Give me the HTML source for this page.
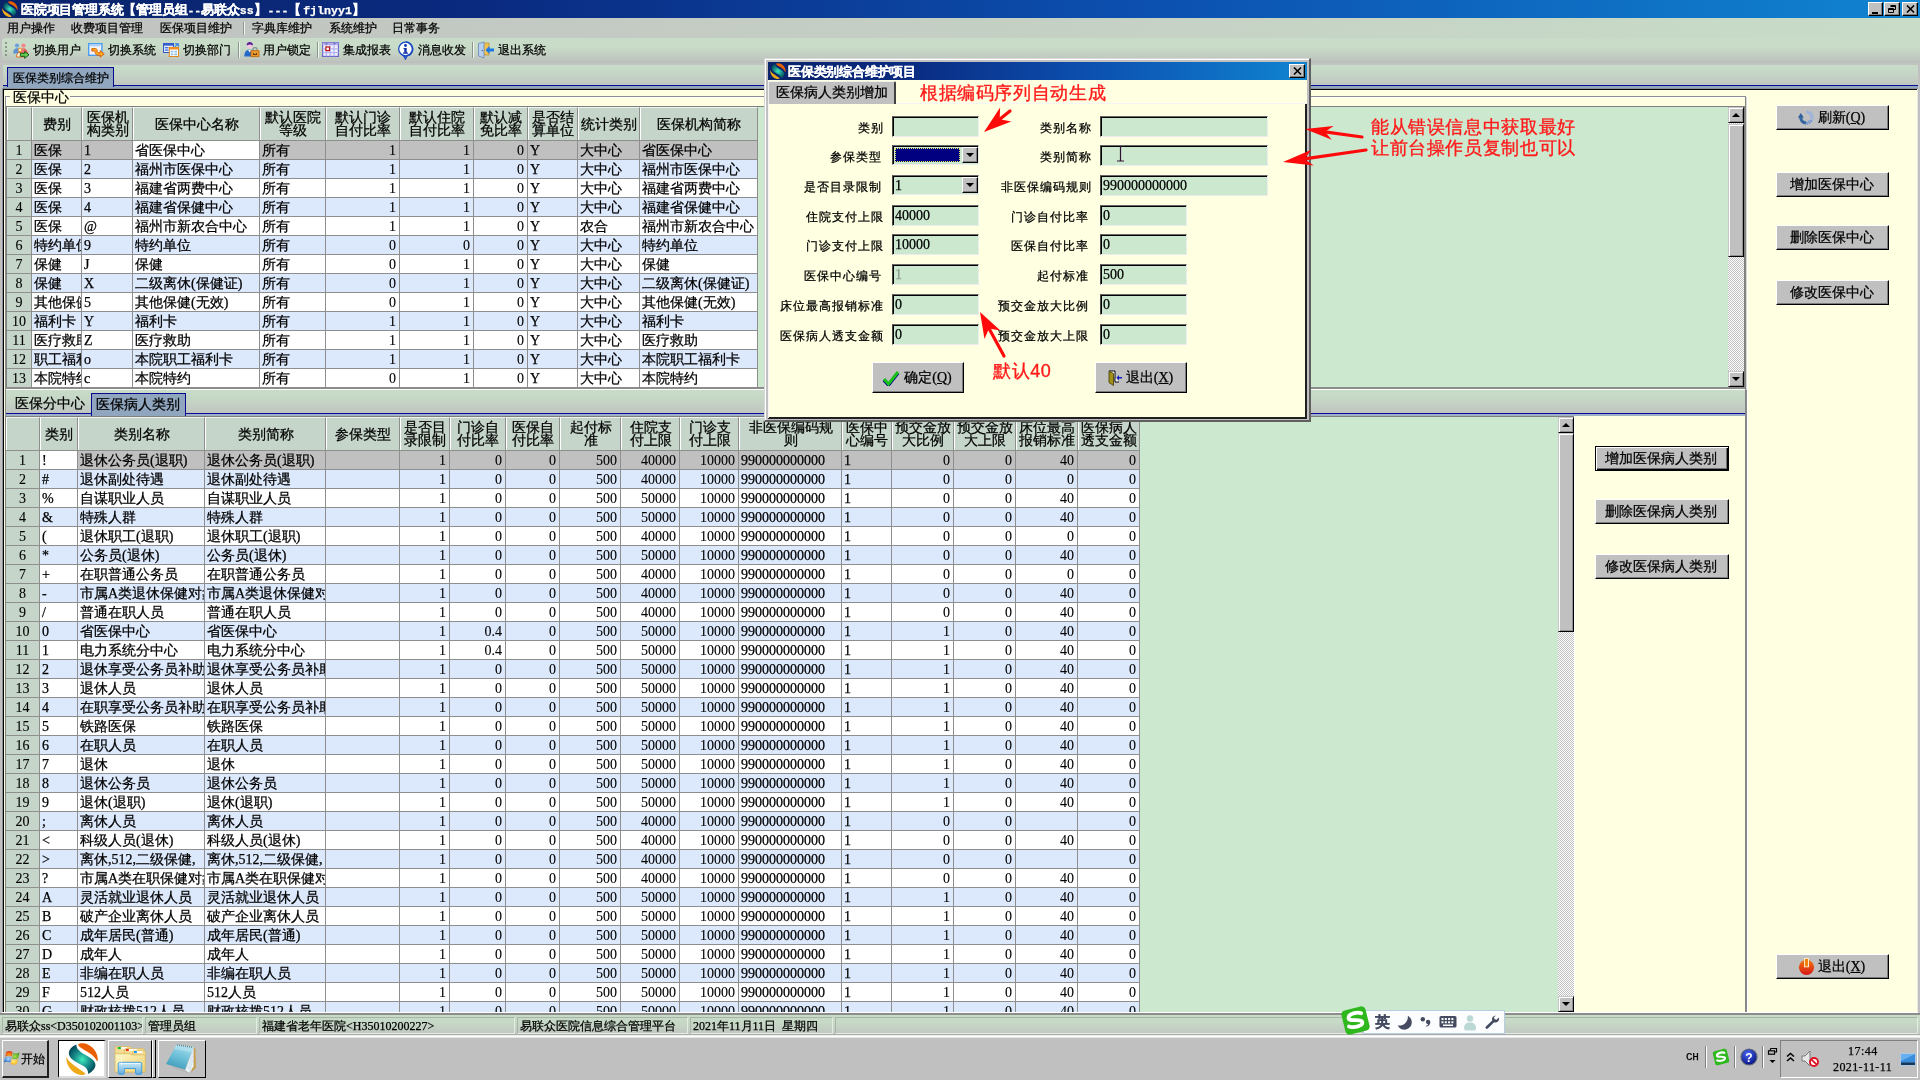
<!DOCTYPE html>
<html lang="zh"><head><meta charset="utf-8"><title>医院项目管理系统</title>
<style>
*{box-sizing:border-box;margin:0;padding:0}
html,body{width:1920px;height:1080px;overflow:hidden;background:#c0c0c0}
body{will-change:transform;-webkit-text-stroke:0.25px currentColor;position:relative;font-family:"Liberation Serif",serif;font-size:12px;color:#000;line-height:1}
.a{position:absolute;white-space:nowrap;overflow:hidden}
.m{font-family:"Liberation Mono",monospace;font-size:11.6px;letter-spacing:0}
.t12{font-size:12px;line-height:14px}
.t14{font-size:14px;line-height:16px}
.g{position:absolute;overflow:hidden}
.c{position:absolute;top:0;height:19px;border-right:1px solid #8e8e8e;border-bottom:1px solid #8e8e8e;font-size:14px;line-height:19px;padding:0 2px 0 2px;white-space:nowrap;overflow:hidden}
.r{text-align:right;padding:0 3px 0 0;-webkit-text-stroke:0.1px currentColor}
.n{text-align:center;background:#c5d5c9 !important;padding:0;-webkit-text-stroke:0.1px currentColor}
.row{position:absolute;left:0;height:19px}
.h{position:absolute;top:0;background:#c5d5c9;border-left:1px solid #fff;border-right:1px solid #8e8e8e;border-top:1px solid #eef4ee;font-size:14px;line-height:13px;text-align:center;white-space:nowrap;overflow:hidden;display:flex;align-items:center;justify-content:center}
.btn{position:absolute;background:#c0c0c0;border-top:1px solid #fff;border-left:1px solid #fff;border-right:1px solid #000;border-bottom:1px solid #000;box-shadow:inset -1px -1px 0 #7c7c7c;font-size:14px;display:flex;align-items:center;justify-content:center;white-space:nowrap;padding:1px 2px 0 0}
.inp{position:absolute;background:#cce8cf;border-top:1px solid #686868;border-left:1px solid #484848;border-right:1px solid #ececec;border-bottom:1px solid #ececec;box-shadow:inset 1px 1px 0 #000;font-size:14px;line-height:18px;padding:1px 0 0 2px;white-space:nowrap;overflow:hidden}
.lbl{position:absolute;font-size:12px;line-height:14px;text-align:right;white-space:nowrap;letter-spacing:1px}
.red{position:absolute;color:#ff1a1a;font-family:"Liberation Sans",sans-serif;font-weight:500;-webkit-text-stroke:0.35px #ff1a1a;white-space:nowrap}
.sp{position:absolute;top:1017px;height:17px;border:1px solid #a8b4a8;border-right-color:#e4ece4;border-bottom-color:#e4ece4;font-size:12px;line-height:16px;padding-left:2px;word-spacing:3px;white-space:nowrap;overflow:hidden}
.tb{position:absolute;top:1040px;height:38px;background:#c0c0c0;border-top:1px solid #fff;border-left:1px solid #fff;border-right:2px solid #202020;border-bottom:2px solid #202020}
</style></head><body>

<div class="a" style="left:0;top:0;width:1920px;height:18px;background:linear-gradient(90deg,#0a246a 0%,#0a2a80 25%,#0c50b0 60%,#1084d0 100%)"></div>
<svg class="a" style="left:2px;top:1px" width="16" height="16" viewBox="0 0 33 32" preserveAspectRatio="none"><defs><radialGradient id="lg2" cx="16.500" cy="16.500" r="15" gradientUnits="userSpaceOnUse"><stop offset="0" stop-color="#40ecbc"/><stop offset=".45" stop-color="#1e9c94"/><stop offset="1" stop-color="#044c5c"/></radialGradient></defs><path d="M12.300 1.600C14 0 19 -.5 24 2.500C29 5.500 32.500 11 32.300 17.500L31.600 18.200C29 13 24 10 19 7.200C16 5.500 13 4 12.300 1.600Z" fill="#ea5e04"/><path d="M.6 13.800C-.3 19 2.500 25 7.500 29C11.500 32 16.500 32.500 19.300 31.600L19.600 30.300C16 27.500 11 24.500 7 21.500C3.500 19 1.500 16.500 .6 13.800Z" fill="#eeaa18"/><path d="M10.500 1.400C5 3.500 2 8 3.200 12C4.500 16 9 18.500 14 21C19 23.500 22.500 25.500 22.600 30.900C27 28.500 30.500 25 29.800 21C29 17 24.500 14.500 20 12C15 9 10.500 6.500 10.500 1.400Z" fill="url(#lg2)"/></svg>
<div class="a" style="left:21px;top:2px;height:15px;color:#fff;font-size:13px;line-height:15px;font-weight:bold;letter-spacing:-0.2px">医院项目管理系统【管理员组<span class="m">--</span>易联众<span class="m">ss</span>】<span class="m" style="margin-left:1px">---</span>【<span class="m" style="margin-left:2px">fjlnyy1</span>】</div>
<div class="a" style="left:1868px;top:2px;width:15px;height:14px;background:#c0c0c0;border-top:1px solid #fff;border-left:1px solid #fff;border-right:1px solid #000;border-bottom:1px solid #000;box-shadow:inset -1px -1px 0 #808080"><div class="a" style="left:3px;top:9px;width:6px;height:2px;background:#000"></div></div>
<div class="a" style="left:1884px;top:2px;width:16px;height:14px;background:#c0c0c0;border-top:1px solid #fff;border-left:1px solid #fff;border-right:1px solid #000;border-bottom:1px solid #000;box-shadow:inset -1px -1px 0 #808080"><svg class="a" style="left:2px;top:1px" width="10" height="10" viewBox="0 0 10 10"><path d="M3.5 1.5h5v4h-2M3.5 2.5h5" stroke="#000" fill="none"/><path d="M1.5 4.5h5v4h-5zM1.5 5.5h5" stroke="#000" fill="none"/></svg></div>
<div class="a" style="left:1902px;top:2px;width:16px;height:14px;background:#c0c0c0;border-top:1px solid #fff;border-left:1px solid #fff;border-right:1px solid #000;border-bottom:1px solid #000;box-shadow:inset -1px -1px 0 #808080"><svg class="a" style="left:3px;top:2px" width="9" height="8" viewBox="0 0 9 8"><path d="M1 0.5L8 7.5M8 0.5L1 7.5" stroke="#000" stroke-width="1.6"/></svg></div>
<div class="a" style="left:0;top:18px;width:1920px;height:20px;background:linear-gradient(90deg,#c0c2c0 0%,#c3cac3 30%,#c8dcc8 100%)"></div>
<div class="a t12" style="left:7px;top:21px">用户操作</div>
<div class="a t12" style="left:71px;top:21px">收费项目管理</div>
<div class="a t12" style="left:160px;top:21px">医保项目维护</div>
<div class="a t12" style="left:252px;top:21px">字典库维护</div>
<div class="a t12" style="left:329px;top:21px">系统维护</div>
<div class="a t12" style="left:392px;top:21px">日常事务</div>
<div class="a" style="left:243px;top:22px;width:1px;height:13px;background:#909890"></div><div class="a" style="left:244px;top:22px;width:1px;height:13px;background:#eef4ee"></div>
<div class="a" style="left:0;top:38px;width:1920px;height:27px;background:#c0c0c0"></div>
<div class="a" style="left:2px;top:38px;width:1918px;height:25px;border-radius:4px 0 0 4px;background:linear-gradient(180deg,#c9dcc9 0%,#c8dcc8 35%,#c2cec2 70%,#bcbebc 100%)"></div>
<div class="a" style="left:0;top:63px;width:1920px;height:2px;background:#c2c4c2"></div>
<div class="a" style="left:5px;top:42px;width:2px;height:14px;background:repeating-linear-gradient(180deg,#8a968a 0 2px,transparent 2px 4px)"></div>
<svg class="a" style="left:12px;top:42px" width="18" height="17" viewBox="0 0 18 17"><circle cx="5" cy="3.600" r="2.100" fill="#6aa0dc"/><path d="M1.200 11.500c0-3.800 1.600-5.300 3.800-5.300s3.800 1.500 3.800 5.300z" fill="#5a94d4"/><circle cx="11.500" cy="3.600" r="2.100" fill="#f08888"/><path d="M7.700 11.500c0-3.800 1.600-5.300 3.800-5.300s3.800 1.500 3.800 5.300z" fill="#ec7474"/><path d="M12.500 7l3.500 4" stroke="#e04040" stroke-width=".8"/><circle cx="8" cy="8" r="1.900" fill="#fce8c0" stroke="#e07818" stroke-width=".8"/><path d="M4.500 15c0-3 1.500-4.600 3.500-4.600s3.500 1.600 3.500 4.600z" fill="#fff4e0" stroke="#e06810" stroke-width=".9"/><path d="M8.300 11.300h4.400v-2l4.300 3.500-4.300 3.500v-2h-4.400z" fill="#60d050" stroke="#104810" stroke-width=".9"/></svg>
<svg class="a" style="left:88px;top:43px" width="18" height="17" viewBox="0 0 18 17"><rect x=".7" y=".7" width="13.200" height="11.600" fill="#f4f4f8" stroke="#4c9cf0" stroke-width="1.400"/><rect x="2" y="2" width="10.500" height="1.300" fill="#a8d0f8"/><path d="M3.800 5.600h3.600c1.300 0 1.800 1 1.800 2.200s.5 1.800 1.500 1.800h1.500v-2l4 3.300-4 3.300v-2h-2.300c-1.800 0-2.700-1.300-2.700-2.700s-.3-1.400-1-1.400h-2.400z" fill="#fca820" stroke="#d85c08" stroke-width=".9"/></svg>
<svg class="a" style="left:163px;top:43px" width="16" height="14" viewBox="0 0 16 14"><rect x=".5" y=".5" width="10" height="9" fill="#e8eefc" stroke="#3058c0" stroke-width="1"/><rect x=".5" y=".5" width="10" height="2.200" fill="#3860d0"/><rect x="1.800" y="4" width="3.600" height="1.400" fill="#4878e0"/><rect x="1.800" y="6.400" width="3.600" height="1.400" fill="#4878e0"/><path d="M11.800 .7h3.500v3M15.300 .7l-3.400 3" stroke="#2878e8" stroke-width="1.100" fill="none"/><rect x="6.300" y="4.500" width="9.200" height="9" fill="#fff" stroke="#e08818" stroke-width="1"/><rect x="6.300" y="4.500" width="9.200" height="2" fill="#f09020"/><path d="M7.800 7.800h2.600v1.800h-2.600zM11.400 7.800h2.600v1.800h-2.600zM7.800 10.600h2.600v1.700h-2.600zM11.400 10.600h2.600v1.700h-2.600z" fill="#90c0e8"/></svg>
<svg class="a" style="left:243px;top:41px" width="17" height="17" viewBox="0 0 17 17"><circle cx="6.800" cy="4.500" r="3" fill="#f0c8e0"/><path d="M3.700 3.800c0-3.600 6.200-3.600 6.200 0l-.4.600c-1.800-1.300-3.600-1.300-5.400 0z" fill="#5a2090"/><path d="M1.300 15.500c0-5 2.200-6.800 5.500-6.800s5.500 1.800 5.500 6.800z" fill="#2468c8"/><path d="M5.200 8.900l1.600 2.600 1.600-2.600z" fill="#fff"/><path d="M10 9.800v-1.300c0-2.400 4-2.400 4 0v1.300" stroke="#8a8e98" stroke-width="1.200" fill="none"/><rect x="8" y="9.700" width="8" height="6" fill="#f09828" stroke="#b86808" stroke-width=".8"/><path d="M10 11.300l2 1.400 2-1.400v2.600h-4z" fill="#6a3c00"/><path d="M10.300 11.500l1.700 1.200 1.700-1.200" stroke="#f8d8a0" stroke-width=".6" fill="none"/></svg>
<svg class="a" style="left:322px;top:42px" width="17" height="15" viewBox="0 0 17 15"><rect x=".6" y=".6" width="15.800" height="13.800" fill="#f0f0ff" stroke="#6868c8" stroke-width="1.200"/><rect x=".6" y=".6" width="15.800" height="2.600" fill="#b4acec"/><path d="M4.400 3.200v11M8.200 3.200v11M12 3.200v11M.6 6.800h15.800M.6 10.600h15.800" stroke="#b4b4f0" stroke-width="1.300"/><rect x="3.900" y="5" width="3.600" height="3.600" fill="#fff" stroke="#c01010" stroke-width="1.200"/><path d="M3.500 1.800h2M11.500 1.800h2" stroke="#5050a8" stroke-width=".9"/></svg>
<svg class="a" style="left:397px;top:41px" width="18" height="19" viewBox="0 0 18 19"><path d="M8.500 1a7 7 0 1 1-2 13.700l2 3.300 1.500-3.100a7 7 0 0 0-1.500-13.900z" fill="#fff" stroke="#1848c0" stroke-width="1.300"/><circle cx="8.500" cy="8" r="6.800" fill="#fff" stroke="#1848c0" stroke-width="1.300"/><circle cx="8.500" cy="4.500" r="1.400" fill="#1030a8"/><path d="M6.500 7h3.200v4.500h1.300v1.300h-5v-1.300h1.300v-3.200h-.8z" fill="#1030a8"/></svg>
<svg class="a" style="left:477px;top:41px" width="18" height="18" viewBox="0 0 18 18"><rect x="6" y="2" width="6" height="12" fill="#f0c050" stroke="#a88030" stroke-width=".6"/><path d="M1.500 2.500l5.500-1.500v16l-5.500-2z" fill="#b8d0f0" stroke="#6888b8" stroke-width=".8"/><circle cx="5.300" cy="9.500" r=".8" fill="#4868a0"/><path d="M17 7.500h-4.500v-2.500l-4 4 4 4v-2.500h4.500z" fill="#1878e8"/></svg>
<div class="a t12" style="left:33px;top:43px">切换用户</div>
<div class="a t12" style="left:108px;top:43px">切换系统</div>
<div class="a t12" style="left:183px;top:43px">切换部门</div>
<div class="a t12" style="left:263px;top:43px">用户锁定</div>
<div class="a t12" style="left:343px;top:43px">集成报表</div>
<div class="a t12" style="left:418px;top:43px">消息收发</div>
<div class="a t12" style="left:498px;top:43px">退出系统</div>
<div class="a" style="left:238px;top:42px;width:1px;height:16px;background:#8c948c"></div><div class="a" style="left:239px;top:42px;width:1px;height:16px;background:#f0f6f0"></div>
<div class="a" style="left:317px;top:42px;width:1px;height:16px;background:#8c948c"></div><div class="a" style="left:318px;top:42px;width:1px;height:16px;background:#f0f6f0"></div>
<div class="a" style="left:472px;top:42px;width:1px;height:16px;background:#8c948c"></div><div class="a" style="left:473px;top:42px;width:1px;height:16px;background:#f0f6f0"></div>
<div class="a" style="left:3px;top:65px;width:1915px;height:21px;background:linear-gradient(180deg,#c8dcc8 0%,#c6d6c6 40%,#c0c4c0 100%)"></div>
<div class="a" style="left:3px;top:85px;width:1915px;height:1px;background:#0a0a90"></div>
<div class="a" style="left:3px;top:86px;width:1915px;height:2px;background:#90a6be"></div>
<div class="a t12" style="left:7px;top:67px;width:107px;height:20px;background:#90a6be;border:1px solid #0a0a90;border-bottom:none;padding:3px 0 0 5px">医保类别综合维护</div>
<div class="a" style="left:2px;top:88px;width:1916px;height:1px;background:#8c9098"></div><div class="a" style="left:3px;top:89px;width:1914px;height:1px;background:#000"></div>
<div class="a" style="left:2px;top:88px;width:1px;height:925px;background:#8c9098"></div><div class="a" style="left:3px;top:89px;width:1px;height:923px;background:#000"></div>
<div class="a" style="left:4px;top:90px;width:1913px;height:922px;background:#ffffe1"></div>
<div class="a" style="left:1917px;top:89px;width:1px;height:924px;background:#e8e8e8"></div>
<div class="a" style="left:2px;top:1012px;width:1916px;height:1px;background:#fff"></div>
<div class="a" style="left:0px;top:1013px;width:1920px;height:2px;background:#8c8c8c"></div>
<div class="a" style="left:5px;top:96px;width:1741px;height:916px;border:1px solid #8c8c8c;border-bottom:none;box-shadow:inset 1px 1px 0 #fff,1px 0 0 #fff"></div>
<div class="a" style="left:1745px;top:97px;width:1px;height:915px;background:#858585"></div><div class="a" style="left:1746px;top:97px;width:1px;height:293px;background:#d8d8c8"></div><div class="a" style="left:1746px;top:390px;width:1px;height:622px;background:#8c8c8c"></div><div class="a" style="left:1747px;top:97px;width:1px;height:915px;background:#fff"></div>
<div class="a" style="left:10px;top:90px;width:60px;height:16px;background:#ffffe1;font-size:14px;line-height:16px;padding-left:3px">医保中心</div>
<div class="g" style="left:7px;top:107px;width:1721px;height:280px;background:#cce8cf"><div class="h" style="left:0px;width:25px;height:33px"><div></div></div><div class="h" style="left:25px;width:50px;height:33px"><div>费别</div></div><div class="h" style="left:75px;width:51px;height:33px"><div>医保机<br>构类别</div></div><div class="h" style="left:126px;width:127px;height:33px"><div>医保中心名称</div></div><div class="h" style="left:253px;width:66px;height:33px"><div>默认医院<br>等级</div></div><div class="h" style="left:319px;width:74px;height:33px"><div>默认门诊<br>自付比率</div></div><div class="h" style="left:393px;width:74px;height:33px"><div>默认住院<br>自付比率</div></div><div class="h" style="left:467px;width:54px;height:33px"><div>默认减<br>免比率</div></div><div class="h" style="left:521px;width:50px;height:33px"><div>是否结<br>算单位</div></div><div class="h" style="left:571px;width:62px;height:33px"><div>统计类别</div></div><div class="h" style="left:633px;width:118px;height:33px"><div>医保机构简称</div></div><div class="a" style="left:0;top:33px;width:751px;height:1px;background:#8e8e8e"></div><div class="row" style="top:34px;width:751px"><div class="c n" style="left:0px;width:25px;background:#c0c0c0">1</div><div class="c" style="left:25px;width:50px;background:#c0c0c0">医保</div><div class="c" style="left:75px;width:51px;background:#c0c0c0">1</div><div class="c" style="left:126px;width:127px;background:#fff">省医保中心</div><div class="c" style="left:253px;width:66px;background:#c0c0c0">所有</div><div class="c r" style="left:319px;width:74px;background:#c0c0c0">1</div><div class="c r" style="left:393px;width:74px;background:#c0c0c0">1</div><div class="c r" style="left:467px;width:54px;background:#c0c0c0">0</div><div class="c" style="left:521px;width:50px;background:#c0c0c0">Y</div><div class="c" style="left:571px;width:62px;background:#c0c0c0">大中心</div><div class="c" style="left:633px;width:118px;background:#c0c0c0">省医保中心</div></div><div class="row" style="top:53px;width:751px"><div class="c n" style="left:0px;width:25px;background:#dce8fb">2</div><div class="c" style="left:25px;width:50px;background:#dce8fb">医保</div><div class="c" style="left:75px;width:51px;background:#dce8fb">2</div><div class="c" style="left:126px;width:127px;background:#dce8fb">福州市医保中心</div><div class="c" style="left:253px;width:66px;background:#dce8fb">所有</div><div class="c r" style="left:319px;width:74px;background:#dce8fb">1</div><div class="c r" style="left:393px;width:74px;background:#dce8fb">1</div><div class="c r" style="left:467px;width:54px;background:#dce8fb">0</div><div class="c" style="left:521px;width:50px;background:#dce8fb">Y</div><div class="c" style="left:571px;width:62px;background:#dce8fb">大中心</div><div class="c" style="left:633px;width:118px;background:#dce8fb">福州市医保中心</div></div><div class="row" style="top:72px;width:751px"><div class="c n" style="left:0px;width:25px;background:#fff">3</div><div class="c" style="left:25px;width:50px;background:#fff">医保</div><div class="c" style="left:75px;width:51px;background:#fff">3</div><div class="c" style="left:126px;width:127px;background:#fff">福建省两费中心</div><div class="c" style="left:253px;width:66px;background:#fff">所有</div><div class="c r" style="left:319px;width:74px;background:#fff">1</div><div class="c r" style="left:393px;width:74px;background:#fff">1</div><div class="c r" style="left:467px;width:54px;background:#fff">0</div><div class="c" style="left:521px;width:50px;background:#fff">Y</div><div class="c" style="left:571px;width:62px;background:#fff">大中心</div><div class="c" style="left:633px;width:118px;background:#fff">福建省两费中心</div></div><div class="row" style="top:91px;width:751px"><div class="c n" style="left:0px;width:25px;background:#dce8fb">4</div><div class="c" style="left:25px;width:50px;background:#dce8fb">医保</div><div class="c" style="left:75px;width:51px;background:#dce8fb">4</div><div class="c" style="left:126px;width:127px;background:#dce8fb">福建省保健中心</div><div class="c" style="left:253px;width:66px;background:#dce8fb">所有</div><div class="c r" style="left:319px;width:74px;background:#dce8fb">1</div><div class="c r" style="left:393px;width:74px;background:#dce8fb">1</div><div class="c r" style="left:467px;width:54px;background:#dce8fb">0</div><div class="c" style="left:521px;width:50px;background:#dce8fb">Y</div><div class="c" style="left:571px;width:62px;background:#dce8fb">大中心</div><div class="c" style="left:633px;width:118px;background:#dce8fb">福建省保健中心</div></div><div class="row" style="top:110px;width:751px"><div class="c n" style="left:0px;width:25px;background:#fff">5</div><div class="c" style="left:25px;width:50px;background:#fff">医保</div><div class="c" style="left:75px;width:51px;background:#fff">@</div><div class="c" style="left:126px;width:127px;background:#fff">福州市新农合中心</div><div class="c" style="left:253px;width:66px;background:#fff">所有</div><div class="c r" style="left:319px;width:74px;background:#fff">1</div><div class="c r" style="left:393px;width:74px;background:#fff">1</div><div class="c r" style="left:467px;width:54px;background:#fff">0</div><div class="c" style="left:521px;width:50px;background:#fff">Y</div><div class="c" style="left:571px;width:62px;background:#fff">农合</div><div class="c" style="left:633px;width:118px;background:#fff">福州市新农合中心</div></div><div class="row" style="top:129px;width:751px"><div class="c n" style="left:0px;width:25px;background:#dce8fb">6</div><div class="c" style="left:25px;width:50px;background:#dce8fb">特约单位</div><div class="c" style="left:75px;width:51px;background:#dce8fb">9</div><div class="c" style="left:126px;width:127px;background:#dce8fb">特约单位</div><div class="c" style="left:253px;width:66px;background:#dce8fb">所有</div><div class="c r" style="left:319px;width:74px;background:#dce8fb">0</div><div class="c r" style="left:393px;width:74px;background:#dce8fb">0</div><div class="c r" style="left:467px;width:54px;background:#dce8fb">0</div><div class="c" style="left:521px;width:50px;background:#dce8fb">Y</div><div class="c" style="left:571px;width:62px;background:#dce8fb">大中心</div><div class="c" style="left:633px;width:118px;background:#dce8fb">特约单位</div></div><div class="row" style="top:148px;width:751px"><div class="c n" style="left:0px;width:25px;background:#fff">7</div><div class="c" style="left:25px;width:50px;background:#fff">保健</div><div class="c" style="left:75px;width:51px;background:#fff">J</div><div class="c" style="left:126px;width:127px;background:#fff">保健</div><div class="c" style="left:253px;width:66px;background:#fff">所有</div><div class="c r" style="left:319px;width:74px;background:#fff">0</div><div class="c r" style="left:393px;width:74px;background:#fff">1</div><div class="c r" style="left:467px;width:54px;background:#fff">0</div><div class="c" style="left:521px;width:50px;background:#fff">Y</div><div class="c" style="left:571px;width:62px;background:#fff">大中心</div><div class="c" style="left:633px;width:118px;background:#fff">保健</div></div><div class="row" style="top:167px;width:751px"><div class="c n" style="left:0px;width:25px;background:#dce8fb">8</div><div class="c" style="left:25px;width:50px;background:#dce8fb">保健</div><div class="c" style="left:75px;width:51px;background:#dce8fb">X</div><div class="c" style="left:126px;width:127px;background:#dce8fb">二级离休(保健证)</div><div class="c" style="left:253px;width:66px;background:#dce8fb">所有</div><div class="c r" style="left:319px;width:74px;background:#dce8fb">0</div><div class="c r" style="left:393px;width:74px;background:#dce8fb">1</div><div class="c r" style="left:467px;width:54px;background:#dce8fb">0</div><div class="c" style="left:521px;width:50px;background:#dce8fb">Y</div><div class="c" style="left:571px;width:62px;background:#dce8fb">大中心</div><div class="c" style="left:633px;width:118px;background:#dce8fb">二级离休(保健证)</div></div><div class="row" style="top:186px;width:751px"><div class="c n" style="left:0px;width:25px;background:#fff">9</div><div class="c" style="left:25px;width:50px;background:#fff">其他保健</div><div class="c" style="left:75px;width:51px;background:#fff">5</div><div class="c" style="left:126px;width:127px;background:#fff">其他保健(无效)</div><div class="c" style="left:253px;width:66px;background:#fff">所有</div><div class="c r" style="left:319px;width:74px;background:#fff">0</div><div class="c r" style="left:393px;width:74px;background:#fff">1</div><div class="c r" style="left:467px;width:54px;background:#fff">0</div><div class="c" style="left:521px;width:50px;background:#fff">Y</div><div class="c" style="left:571px;width:62px;background:#fff">大中心</div><div class="c" style="left:633px;width:118px;background:#fff">其他保健(无效)</div></div><div class="row" style="top:205px;width:751px"><div class="c n" style="left:0px;width:25px;background:#dce8fb">10</div><div class="c" style="left:25px;width:50px;background:#dce8fb">福利卡</div><div class="c" style="left:75px;width:51px;background:#dce8fb">Y</div><div class="c" style="left:126px;width:127px;background:#dce8fb">福利卡</div><div class="c" style="left:253px;width:66px;background:#dce8fb">所有</div><div class="c r" style="left:319px;width:74px;background:#dce8fb">1</div><div class="c r" style="left:393px;width:74px;background:#dce8fb">1</div><div class="c r" style="left:467px;width:54px;background:#dce8fb">0</div><div class="c" style="left:521px;width:50px;background:#dce8fb">Y</div><div class="c" style="left:571px;width:62px;background:#dce8fb">大中心</div><div class="c" style="left:633px;width:118px;background:#dce8fb">福利卡</div></div><div class="row" style="top:224px;width:751px"><div class="c n" style="left:0px;width:25px;background:#fff">11</div><div class="c" style="left:25px;width:50px;background:#fff">医疗救助</div><div class="c" style="left:75px;width:51px;background:#fff">Z</div><div class="c" style="left:126px;width:127px;background:#fff">医疗救助</div><div class="c" style="left:253px;width:66px;background:#fff">所有</div><div class="c r" style="left:319px;width:74px;background:#fff">1</div><div class="c r" style="left:393px;width:74px;background:#fff">1</div><div class="c r" style="left:467px;width:54px;background:#fff">0</div><div class="c" style="left:521px;width:50px;background:#fff">Y</div><div class="c" style="left:571px;width:62px;background:#fff">大中心</div><div class="c" style="left:633px;width:118px;background:#fff">医疗救助</div></div><div class="row" style="top:243px;width:751px"><div class="c n" style="left:0px;width:25px;background:#dce8fb">12</div><div class="c" style="left:25px;width:50px;background:#dce8fb">职工福利</div><div class="c" style="left:75px;width:51px;background:#dce8fb">o</div><div class="c" style="left:126px;width:127px;background:#dce8fb">本院职工福利卡</div><div class="c" style="left:253px;width:66px;background:#dce8fb">所有</div><div class="c r" style="left:319px;width:74px;background:#dce8fb">1</div><div class="c r" style="left:393px;width:74px;background:#dce8fb">1</div><div class="c r" style="left:467px;width:54px;background:#dce8fb">0</div><div class="c" style="left:521px;width:50px;background:#dce8fb">Y</div><div class="c" style="left:571px;width:62px;background:#dce8fb">大中心</div><div class="c" style="left:633px;width:118px;background:#dce8fb">本院职工福利卡</div></div><div class="row" style="top:262px;width:751px"><div class="c n" style="left:0px;width:25px;background:#fff">13</div><div class="c" style="left:25px;width:50px;background:#fff">本院特约</div><div class="c" style="left:75px;width:51px;background:#fff">c</div><div class="c" style="left:126px;width:127px;background:#fff">本院特约</div><div class="c" style="left:253px;width:66px;background:#fff">所有</div><div class="c r" style="left:319px;width:74px;background:#fff">0</div><div class="c r" style="left:393px;width:74px;background:#fff">1</div><div class="c r" style="left:467px;width:54px;background:#fff">0</div><div class="c" style="left:521px;width:50px;background:#fff">Y</div><div class="c" style="left:571px;width:62px;background:#fff">大中心</div><div class="c" style="left:633px;width:118px;background:#fff">本院特约</div></div></div>
<div class="a" style="left:1728px;top:107px;width:16px;height:280px;background-color:#fff;background-image:linear-gradient(45deg,#c0c0c0 25%,transparent 25%,transparent 75%,#c0c0c0 75%),linear-gradient(45deg,#c0c0c0 25%,transparent 25%,transparent 75%,#c0c0c0 75%);background-size:2px 2px;background-position:0 0,1px 1px"></div><div class="a" style="left:1728px;top:107px;width:16px;height:16px;background:#c0c0c0;border-top:1px solid #c8c8c8;border-left:1px solid #c8c8c8;border-right:1px solid #000;border-bottom:1px solid #000;box-shadow:inset 1px 1px 0 #fff,inset -1px -1px 0 #909090"><svg class="a" style="left:3px;top:5px" width="8" height="4" viewBox="0 0 8 4"><path d="M0 4L4 0L8 4z" fill="#000"/></svg></div><div class="a" style="left:1728px;top:124px;width:16px;height:133px;background:#c0c0c0;border-top:1px solid #c8c8c8;border-left:1px solid #c8c8c8;border-right:1px solid #000;border-bottom:1px solid #000;box-shadow:inset 1px 1px 0 #fff,inset -1px -1px 0 #909090"></div><div class="a" style="left:1728px;top:371px;width:16px;height:16px;background:#c0c0c0;border-top:1px solid #c8c8c8;border-left:1px solid #c8c8c8;border-right:1px solid #000;border-bottom:1px solid #000;box-shadow:inset 1px 1px 0 #fff,inset -1px -1px 0 #909090"><svg class="a" style="left:3px;top:5px" width="8" height="4" viewBox="0 0 8 4"><path d="M0 0L4 4L8 0z" fill="#000"/></svg></div>
<div class="a" style="left:6px;top:106px;width:1739px;height:1px;background:#808080"></div><div class="a" style="left:6px;top:106px;width:1px;height:282px;background:#808080"></div><div class="a" style="left:1744px;top:106px;width:1px;height:282px;background:#808080"></div>
<div class="a" style="left:6px;top:387px;width:1739px;height:2px;background:#8c8c8c"></div><div class="a" style="left:6px;top:389px;width:1739px;height:1px;background:#fff"></div>
<div class="a" style="left:6px;top:390px;width:1739px;height:24px;background:linear-gradient(180deg,#c8dcc8 0%,#c6d6c6 40%,#c0c4c0 100%)"></div>
<div class="a" style="left:6px;top:413px;width:1739px;height:1px;background:#0a0a90"></div>
<div class="a" style="left:6px;top:414px;width:1739px;height:2px;background:#9fb0c8"></div>
<div class="a t14" style="left:15px;top:396px">医保分中心</div>
<div class="a t14" style="left:91px;top:393px;width:95px;height:23px;background:#90a6be;border:1px solid #0a0a90;border-bottom:none;padding:3px 0 0 4px">医保病人类别</div>
<div class="g" style="left:6px;top:417px;width:1552px;height:595px;background:#cce8cf"><div class="h" style="left:0px;width:34px;height:33px"><div></div></div><div class="h" style="left:34px;width:38px;height:33px"><div>类别</div></div><div class="h" style="left:72px;width:127px;height:33px"><div>类别名称</div></div><div class="h" style="left:199px;width:121px;height:33px"><div>类别简称</div></div><div class="h" style="left:320px;width:74px;height:33px"><div>参保类型</div></div><div class="h" style="left:394px;width:50px;height:33px"><div>是否目<br>录限制</div></div><div class="h" style="left:444px;width:56px;height:33px"><div>门诊自<br>付比率</div></div><div class="h" style="left:500px;width:54px;height:33px"><div>医保自<br>付比率</div></div><div class="h" style="left:554px;width:61px;height:33px"><div>起付标<br>准</div></div><div class="h" style="left:615px;width:59px;height:33px"><div>住院支<br>付上限</div></div><div class="h" style="left:674px;width:59px;height:33px"><div>门诊支<br>付上限</div></div><div class="h" style="left:733px;width:103px;height:33px"><div>非医保编码规<br>则</div></div><div class="h" style="left:836px;width:50px;height:33px"><div>医保中<br>心编号</div></div><div class="h" style="left:886px;width:62px;height:33px"><div>预交金放<br>大比例</div></div><div class="h" style="left:948px;width:62px;height:33px"><div>预交金放<br>大上限</div></div><div class="h" style="left:1010px;width:62px;height:33px"><div>床位最高<br>报销标准</div></div><div class="h" style="left:1072px;width:62px;height:33px"><div>医保病人<br>透支金额</div></div><div class="a" style="left:0;top:33px;width:1134px;height:1px;background:#8e8e8e"></div><div class="row" style="top:34px;width:1134px"><div class="c n" style="left:0px;width:34px;background:#c0c0c0">1</div><div class="c" style="left:34px;width:38px;background:#fff">!</div><div class="c" style="left:72px;width:127px;background:#c0c0c0">退休公务员(退职)</div><div class="c" style="left:199px;width:121px;background:#c0c0c0">退休公务员(退职)</div><div class="c" style="left:320px;width:74px;background:#c0c0c0"></div><div class="c r" style="left:394px;width:50px;background:#c0c0c0">1</div><div class="c r" style="left:444px;width:56px;background:#c0c0c0">0</div><div class="c r" style="left:500px;width:54px;background:#c0c0c0">0</div><div class="c r" style="left:554px;width:61px;background:#c0c0c0">500</div><div class="c r" style="left:615px;width:59px;background:#c0c0c0">40000</div><div class="c r" style="left:674px;width:59px;background:#c0c0c0">10000</div><div class="c" style="left:733px;width:103px;background:#c0c0c0">990000000000</div><div class="c" style="left:836px;width:50px;background:#c0c0c0">1</div><div class="c r" style="left:886px;width:62px;background:#c0c0c0">0</div><div class="c r" style="left:948px;width:62px;background:#c0c0c0">0</div><div class="c r" style="left:1010px;width:62px;background:#c0c0c0">40</div><div class="c r" style="left:1072px;width:62px;background:#c0c0c0">0</div></div><div class="row" style="top:53px;width:1134px"><div class="c n" style="left:0px;width:34px;background:#dce8fb">2</div><div class="c" style="left:34px;width:38px;background:#dce8fb">#</div><div class="c" style="left:72px;width:127px;background:#dce8fb">退休副处待遇</div><div class="c" style="left:199px;width:121px;background:#dce8fb">退休副处待遇</div><div class="c" style="left:320px;width:74px;background:#dce8fb"></div><div class="c r" style="left:394px;width:50px;background:#dce8fb">1</div><div class="c r" style="left:444px;width:56px;background:#dce8fb">0</div><div class="c r" style="left:500px;width:54px;background:#dce8fb">0</div><div class="c r" style="left:554px;width:61px;background:#dce8fb">500</div><div class="c r" style="left:615px;width:59px;background:#dce8fb">40000</div><div class="c r" style="left:674px;width:59px;background:#dce8fb">10000</div><div class="c" style="left:733px;width:103px;background:#dce8fb">990000000000</div><div class="c" style="left:836px;width:50px;background:#dce8fb">1</div><div class="c r" style="left:886px;width:62px;background:#dce8fb">0</div><div class="c r" style="left:948px;width:62px;background:#dce8fb">0</div><div class="c r" style="left:1010px;width:62px;background:#dce8fb">0</div><div class="c r" style="left:1072px;width:62px;background:#dce8fb">0</div></div><div class="row" style="top:72px;width:1134px"><div class="c n" style="left:0px;width:34px;background:#fff">3</div><div class="c" style="left:34px;width:38px;background:#fff">%</div><div class="c" style="left:72px;width:127px;background:#fff">自谋职业人员</div><div class="c" style="left:199px;width:121px;background:#fff">自谋职业人员</div><div class="c" style="left:320px;width:74px;background:#fff"></div><div class="c r" style="left:394px;width:50px;background:#fff">1</div><div class="c r" style="left:444px;width:56px;background:#fff">0</div><div class="c r" style="left:500px;width:54px;background:#fff">0</div><div class="c r" style="left:554px;width:61px;background:#fff">500</div><div class="c r" style="left:615px;width:59px;background:#fff">50000</div><div class="c r" style="left:674px;width:59px;background:#fff">10000</div><div class="c" style="left:733px;width:103px;background:#fff">990000000000</div><div class="c" style="left:836px;width:50px;background:#fff">1</div><div class="c r" style="left:886px;width:62px;background:#fff">0</div><div class="c r" style="left:948px;width:62px;background:#fff">0</div><div class="c r" style="left:1010px;width:62px;background:#fff">40</div><div class="c r" style="left:1072px;width:62px;background:#fff">0</div></div><div class="row" style="top:91px;width:1134px"><div class="c n" style="left:0px;width:34px;background:#dce8fb">4</div><div class="c" style="left:34px;width:38px;background:#dce8fb">&amp;</div><div class="c" style="left:72px;width:127px;background:#dce8fb">特殊人群</div><div class="c" style="left:199px;width:121px;background:#dce8fb">特殊人群</div><div class="c" style="left:320px;width:74px;background:#dce8fb"></div><div class="c r" style="left:394px;width:50px;background:#dce8fb">1</div><div class="c r" style="left:444px;width:56px;background:#dce8fb">0</div><div class="c r" style="left:500px;width:54px;background:#dce8fb">0</div><div class="c r" style="left:554px;width:61px;background:#dce8fb">500</div><div class="c r" style="left:615px;width:59px;background:#dce8fb">50000</div><div class="c r" style="left:674px;width:59px;background:#dce8fb">10000</div><div class="c" style="left:733px;width:103px;background:#dce8fb">990000000000</div><div class="c" style="left:836px;width:50px;background:#dce8fb">1</div><div class="c r" style="left:886px;width:62px;background:#dce8fb">0</div><div class="c r" style="left:948px;width:62px;background:#dce8fb">0</div><div class="c r" style="left:1010px;width:62px;background:#dce8fb">40</div><div class="c r" style="left:1072px;width:62px;background:#dce8fb">0</div></div><div class="row" style="top:110px;width:1134px"><div class="c n" style="left:0px;width:34px;background:#fff">5</div><div class="c" style="left:34px;width:38px;background:#fff">(</div><div class="c" style="left:72px;width:127px;background:#fff">退休职工(退职)</div><div class="c" style="left:199px;width:121px;background:#fff">退休职工(退职)</div><div class="c" style="left:320px;width:74px;background:#fff"></div><div class="c r" style="left:394px;width:50px;background:#fff">1</div><div class="c r" style="left:444px;width:56px;background:#fff">0</div><div class="c r" style="left:500px;width:54px;background:#fff">0</div><div class="c r" style="left:554px;width:61px;background:#fff">500</div><div class="c r" style="left:615px;width:59px;background:#fff">40000</div><div class="c r" style="left:674px;width:59px;background:#fff">10000</div><div class="c" style="left:733px;width:103px;background:#fff">990000000000</div><div class="c" style="left:836px;width:50px;background:#fff">1</div><div class="c r" style="left:886px;width:62px;background:#fff">0</div><div class="c r" style="left:948px;width:62px;background:#fff">0</div><div class="c r" style="left:1010px;width:62px;background:#fff">0</div><div class="c r" style="left:1072px;width:62px;background:#fff">0</div></div><div class="row" style="top:129px;width:1134px"><div class="c n" style="left:0px;width:34px;background:#dce8fb">6</div><div class="c" style="left:34px;width:38px;background:#dce8fb">*</div><div class="c" style="left:72px;width:127px;background:#dce8fb">公务员(退休)</div><div class="c" style="left:199px;width:121px;background:#dce8fb">公务员(退休)</div><div class="c" style="left:320px;width:74px;background:#dce8fb"></div><div class="c r" style="left:394px;width:50px;background:#dce8fb">1</div><div class="c r" style="left:444px;width:56px;background:#dce8fb">0</div><div class="c r" style="left:500px;width:54px;background:#dce8fb">0</div><div class="c r" style="left:554px;width:61px;background:#dce8fb">500</div><div class="c r" style="left:615px;width:59px;background:#dce8fb">50000</div><div class="c r" style="left:674px;width:59px;background:#dce8fb">10000</div><div class="c" style="left:733px;width:103px;background:#dce8fb">990000000000</div><div class="c" style="left:836px;width:50px;background:#dce8fb">1</div><div class="c r" style="left:886px;width:62px;background:#dce8fb">0</div><div class="c r" style="left:948px;width:62px;background:#dce8fb">0</div><div class="c r" style="left:1010px;width:62px;background:#dce8fb">40</div><div class="c r" style="left:1072px;width:62px;background:#dce8fb">0</div></div><div class="row" style="top:148px;width:1134px"><div class="c n" style="left:0px;width:34px;background:#fff">7</div><div class="c" style="left:34px;width:38px;background:#fff">+</div><div class="c" style="left:72px;width:127px;background:#fff">在职普通公务员</div><div class="c" style="left:199px;width:121px;background:#fff">在职普通公务员</div><div class="c" style="left:320px;width:74px;background:#fff"></div><div class="c r" style="left:394px;width:50px;background:#fff">1</div><div class="c r" style="left:444px;width:56px;background:#fff">0</div><div class="c r" style="left:500px;width:54px;background:#fff">0</div><div class="c r" style="left:554px;width:61px;background:#fff">500</div><div class="c r" style="left:615px;width:59px;background:#fff">40000</div><div class="c r" style="left:674px;width:59px;background:#fff">10000</div><div class="c" style="left:733px;width:103px;background:#fff">990000000000</div><div class="c" style="left:836px;width:50px;background:#fff">1</div><div class="c r" style="left:886px;width:62px;background:#fff">0</div><div class="c r" style="left:948px;width:62px;background:#fff">0</div><div class="c r" style="left:1010px;width:62px;background:#fff">0</div><div class="c r" style="left:1072px;width:62px;background:#fff">0</div></div><div class="row" style="top:167px;width:1134px"><div class="c n" style="left:0px;width:34px;background:#dce8fb">8</div><div class="c" style="left:34px;width:38px;background:#dce8fb">-</div><div class="c" style="left:72px;width:127px;background:#dce8fb">市属A类退休保健对象</div><div class="c" style="left:199px;width:121px;background:#dce8fb">市属A类退休保健对象</div><div class="c" style="left:320px;width:74px;background:#dce8fb"></div><div class="c r" style="left:394px;width:50px;background:#dce8fb">1</div><div class="c r" style="left:444px;width:56px;background:#dce8fb">0</div><div class="c r" style="left:500px;width:54px;background:#dce8fb">0</div><div class="c r" style="left:554px;width:61px;background:#dce8fb">500</div><div class="c r" style="left:615px;width:59px;background:#dce8fb">40000</div><div class="c r" style="left:674px;width:59px;background:#dce8fb">10000</div><div class="c" style="left:733px;width:103px;background:#dce8fb">990000000000</div><div class="c" style="left:836px;width:50px;background:#dce8fb">1</div><div class="c r" style="left:886px;width:62px;background:#dce8fb">0</div><div class="c r" style="left:948px;width:62px;background:#dce8fb">0</div><div class="c r" style="left:1010px;width:62px;background:#dce8fb">40</div><div class="c r" style="left:1072px;width:62px;background:#dce8fb">0</div></div><div class="row" style="top:186px;width:1134px"><div class="c n" style="left:0px;width:34px;background:#fff">9</div><div class="c" style="left:34px;width:38px;background:#fff">/</div><div class="c" style="left:72px;width:127px;background:#fff">普通在职人员</div><div class="c" style="left:199px;width:121px;background:#fff">普通在职人员</div><div class="c" style="left:320px;width:74px;background:#fff"></div><div class="c r" style="left:394px;width:50px;background:#fff">1</div><div class="c r" style="left:444px;width:56px;background:#fff">0</div><div class="c r" style="left:500px;width:54px;background:#fff">0</div><div class="c r" style="left:554px;width:61px;background:#fff">500</div><div class="c r" style="left:615px;width:59px;background:#fff">40000</div><div class="c r" style="left:674px;width:59px;background:#fff">10000</div><div class="c" style="left:733px;width:103px;background:#fff">990000000000</div><div class="c" style="left:836px;width:50px;background:#fff">1</div><div class="c r" style="left:886px;width:62px;background:#fff">0</div><div class="c r" style="left:948px;width:62px;background:#fff">0</div><div class="c r" style="left:1010px;width:62px;background:#fff">40</div><div class="c r" style="left:1072px;width:62px;background:#fff">0</div></div><div class="row" style="top:205px;width:1134px"><div class="c n" style="left:0px;width:34px;background:#dce8fb">10</div><div class="c" style="left:34px;width:38px;background:#dce8fb">0</div><div class="c" style="left:72px;width:127px;background:#dce8fb">省医保中心</div><div class="c" style="left:199px;width:121px;background:#dce8fb">省医保中心</div><div class="c" style="left:320px;width:74px;background:#dce8fb"></div><div class="c r" style="left:394px;width:50px;background:#dce8fb">1</div><div class="c r" style="left:444px;width:56px;background:#dce8fb">0.4</div><div class="c r" style="left:500px;width:54px;background:#dce8fb">0</div><div class="c r" style="left:554px;width:61px;background:#dce8fb">500</div><div class="c r" style="left:615px;width:59px;background:#dce8fb">50000</div><div class="c r" style="left:674px;width:59px;background:#dce8fb">10000</div><div class="c" style="left:733px;width:103px;background:#dce8fb">990000000000</div><div class="c" style="left:836px;width:50px;background:#dce8fb">1</div><div class="c r" style="left:886px;width:62px;background:#dce8fb">1</div><div class="c r" style="left:948px;width:62px;background:#dce8fb">0</div><div class="c r" style="left:1010px;width:62px;background:#dce8fb">40</div><div class="c r" style="left:1072px;width:62px;background:#dce8fb">0</div></div><div class="row" style="top:224px;width:1134px"><div class="c n" style="left:0px;width:34px;background:#fff">11</div><div class="c" style="left:34px;width:38px;background:#fff">1</div><div class="c" style="left:72px;width:127px;background:#fff">电力系统分中心</div><div class="c" style="left:199px;width:121px;background:#fff">电力系统分中心</div><div class="c" style="left:320px;width:74px;background:#fff"></div><div class="c r" style="left:394px;width:50px;background:#fff">1</div><div class="c r" style="left:444px;width:56px;background:#fff">0.4</div><div class="c r" style="left:500px;width:54px;background:#fff">0</div><div class="c r" style="left:554px;width:61px;background:#fff">500</div><div class="c r" style="left:615px;width:59px;background:#fff">50000</div><div class="c r" style="left:674px;width:59px;background:#fff">10000</div><div class="c" style="left:733px;width:103px;background:#fff">990000000000</div><div class="c" style="left:836px;width:50px;background:#fff">1</div><div class="c r" style="left:886px;width:62px;background:#fff">1</div><div class="c r" style="left:948px;width:62px;background:#fff">0</div><div class="c r" style="left:1010px;width:62px;background:#fff">40</div><div class="c r" style="left:1072px;width:62px;background:#fff">0</div></div><div class="row" style="top:243px;width:1134px"><div class="c n" style="left:0px;width:34px;background:#dce8fb">12</div><div class="c" style="left:34px;width:38px;background:#dce8fb">2</div><div class="c" style="left:72px;width:127px;background:#dce8fb">退休享受公务员补助</div><div class="c" style="left:199px;width:121px;background:#dce8fb">退休享受公务员补助</div><div class="c" style="left:320px;width:74px;background:#dce8fb"></div><div class="c r" style="left:394px;width:50px;background:#dce8fb">1</div><div class="c r" style="left:444px;width:56px;background:#dce8fb">0</div><div class="c r" style="left:500px;width:54px;background:#dce8fb">0</div><div class="c r" style="left:554px;width:61px;background:#dce8fb">500</div><div class="c r" style="left:615px;width:59px;background:#dce8fb">50000</div><div class="c r" style="left:674px;width:59px;background:#dce8fb">10000</div><div class="c" style="left:733px;width:103px;background:#dce8fb">990000000000</div><div class="c" style="left:836px;width:50px;background:#dce8fb">1</div><div class="c r" style="left:886px;width:62px;background:#dce8fb">1</div><div class="c r" style="left:948px;width:62px;background:#dce8fb">0</div><div class="c r" style="left:1010px;width:62px;background:#dce8fb">40</div><div class="c r" style="left:1072px;width:62px;background:#dce8fb">0</div></div><div class="row" style="top:262px;width:1134px"><div class="c n" style="left:0px;width:34px;background:#fff">13</div><div class="c" style="left:34px;width:38px;background:#fff">3</div><div class="c" style="left:72px;width:127px;background:#fff">退休人员</div><div class="c" style="left:199px;width:121px;background:#fff">退休人员</div><div class="c" style="left:320px;width:74px;background:#fff"></div><div class="c r" style="left:394px;width:50px;background:#fff">1</div><div class="c r" style="left:444px;width:56px;background:#fff">0</div><div class="c r" style="left:500px;width:54px;background:#fff">0</div><div class="c r" style="left:554px;width:61px;background:#fff">500</div><div class="c r" style="left:615px;width:59px;background:#fff">50000</div><div class="c r" style="left:674px;width:59px;background:#fff">10000</div><div class="c" style="left:733px;width:103px;background:#fff">990000000000</div><div class="c" style="left:836px;width:50px;background:#fff">1</div><div class="c r" style="left:886px;width:62px;background:#fff">1</div><div class="c r" style="left:948px;width:62px;background:#fff">0</div><div class="c r" style="left:1010px;width:62px;background:#fff">40</div><div class="c r" style="left:1072px;width:62px;background:#fff">0</div></div><div class="row" style="top:281px;width:1134px"><div class="c n" style="left:0px;width:34px;background:#dce8fb">14</div><div class="c" style="left:34px;width:38px;background:#dce8fb">4</div><div class="c" style="left:72px;width:127px;background:#dce8fb">在职享受公务员补助</div><div class="c" style="left:199px;width:121px;background:#dce8fb">在职享受公务员补助</div><div class="c" style="left:320px;width:74px;background:#dce8fb"></div><div class="c r" style="left:394px;width:50px;background:#dce8fb">1</div><div class="c r" style="left:444px;width:56px;background:#dce8fb">0</div><div class="c r" style="left:500px;width:54px;background:#dce8fb">0</div><div class="c r" style="left:554px;width:61px;background:#dce8fb">500</div><div class="c r" style="left:615px;width:59px;background:#dce8fb">50000</div><div class="c r" style="left:674px;width:59px;background:#dce8fb">10000</div><div class="c" style="left:733px;width:103px;background:#dce8fb">990000000000</div><div class="c" style="left:836px;width:50px;background:#dce8fb">1</div><div class="c r" style="left:886px;width:62px;background:#dce8fb">1</div><div class="c r" style="left:948px;width:62px;background:#dce8fb">0</div><div class="c r" style="left:1010px;width:62px;background:#dce8fb">40</div><div class="c r" style="left:1072px;width:62px;background:#dce8fb">0</div></div><div class="row" style="top:300px;width:1134px"><div class="c n" style="left:0px;width:34px;background:#fff">15</div><div class="c" style="left:34px;width:38px;background:#fff">5</div><div class="c" style="left:72px;width:127px;background:#fff">铁路医保</div><div class="c" style="left:199px;width:121px;background:#fff">铁路医保</div><div class="c" style="left:320px;width:74px;background:#fff"></div><div class="c r" style="left:394px;width:50px;background:#fff">1</div><div class="c r" style="left:444px;width:56px;background:#fff">0</div><div class="c r" style="left:500px;width:54px;background:#fff">0</div><div class="c r" style="left:554px;width:61px;background:#fff">500</div><div class="c r" style="left:615px;width:59px;background:#fff">50000</div><div class="c r" style="left:674px;width:59px;background:#fff">10000</div><div class="c" style="left:733px;width:103px;background:#fff">990000000000</div><div class="c" style="left:836px;width:50px;background:#fff">1</div><div class="c r" style="left:886px;width:62px;background:#fff">1</div><div class="c r" style="left:948px;width:62px;background:#fff">0</div><div class="c r" style="left:1010px;width:62px;background:#fff">40</div><div class="c r" style="left:1072px;width:62px;background:#fff">0</div></div><div class="row" style="top:319px;width:1134px"><div class="c n" style="left:0px;width:34px;background:#dce8fb">16</div><div class="c" style="left:34px;width:38px;background:#dce8fb">6</div><div class="c" style="left:72px;width:127px;background:#dce8fb">在职人员</div><div class="c" style="left:199px;width:121px;background:#dce8fb">在职人员</div><div class="c" style="left:320px;width:74px;background:#dce8fb"></div><div class="c r" style="left:394px;width:50px;background:#dce8fb">1</div><div class="c r" style="left:444px;width:56px;background:#dce8fb">0</div><div class="c r" style="left:500px;width:54px;background:#dce8fb">0</div><div class="c r" style="left:554px;width:61px;background:#dce8fb">500</div><div class="c r" style="left:615px;width:59px;background:#dce8fb">50000</div><div class="c r" style="left:674px;width:59px;background:#dce8fb">10000</div><div class="c" style="left:733px;width:103px;background:#dce8fb">990000000000</div><div class="c" style="left:836px;width:50px;background:#dce8fb">1</div><div class="c r" style="left:886px;width:62px;background:#dce8fb">1</div><div class="c r" style="left:948px;width:62px;background:#dce8fb">0</div><div class="c r" style="left:1010px;width:62px;background:#dce8fb">40</div><div class="c r" style="left:1072px;width:62px;background:#dce8fb">0</div></div><div class="row" style="top:338px;width:1134px"><div class="c n" style="left:0px;width:34px;background:#fff">17</div><div class="c" style="left:34px;width:38px;background:#fff">7</div><div class="c" style="left:72px;width:127px;background:#fff">退休</div><div class="c" style="left:199px;width:121px;background:#fff">退休</div><div class="c" style="left:320px;width:74px;background:#fff"></div><div class="c r" style="left:394px;width:50px;background:#fff">1</div><div class="c r" style="left:444px;width:56px;background:#fff">0</div><div class="c r" style="left:500px;width:54px;background:#fff">0</div><div class="c r" style="left:554px;width:61px;background:#fff">500</div><div class="c r" style="left:615px;width:59px;background:#fff">50000</div><div class="c r" style="left:674px;width:59px;background:#fff">10000</div><div class="c" style="left:733px;width:103px;background:#fff">990000000000</div><div class="c" style="left:836px;width:50px;background:#fff">1</div><div class="c r" style="left:886px;width:62px;background:#fff">1</div><div class="c r" style="left:948px;width:62px;background:#fff">0</div><div class="c r" style="left:1010px;width:62px;background:#fff">40</div><div class="c r" style="left:1072px;width:62px;background:#fff">0</div></div><div class="row" style="top:357px;width:1134px"><div class="c n" style="left:0px;width:34px;background:#dce8fb">18</div><div class="c" style="left:34px;width:38px;background:#dce8fb">8</div><div class="c" style="left:72px;width:127px;background:#dce8fb">退休公务员</div><div class="c" style="left:199px;width:121px;background:#dce8fb">退休公务员</div><div class="c" style="left:320px;width:74px;background:#dce8fb"></div><div class="c r" style="left:394px;width:50px;background:#dce8fb">1</div><div class="c r" style="left:444px;width:56px;background:#dce8fb">0</div><div class="c r" style="left:500px;width:54px;background:#dce8fb">0</div><div class="c r" style="left:554px;width:61px;background:#dce8fb">500</div><div class="c r" style="left:615px;width:59px;background:#dce8fb">50000</div><div class="c r" style="left:674px;width:59px;background:#dce8fb">10000</div><div class="c" style="left:733px;width:103px;background:#dce8fb">990000000000</div><div class="c" style="left:836px;width:50px;background:#dce8fb">1</div><div class="c r" style="left:886px;width:62px;background:#dce8fb">1</div><div class="c r" style="left:948px;width:62px;background:#dce8fb">0</div><div class="c r" style="left:1010px;width:62px;background:#dce8fb">40</div><div class="c r" style="left:1072px;width:62px;background:#dce8fb">0</div></div><div class="row" style="top:376px;width:1134px"><div class="c n" style="left:0px;width:34px;background:#fff">19</div><div class="c" style="left:34px;width:38px;background:#fff">9</div><div class="c" style="left:72px;width:127px;background:#fff">退休(退职)</div><div class="c" style="left:199px;width:121px;background:#fff">退休(退职)</div><div class="c" style="left:320px;width:74px;background:#fff"></div><div class="c r" style="left:394px;width:50px;background:#fff">1</div><div class="c r" style="left:444px;width:56px;background:#fff">0</div><div class="c r" style="left:500px;width:54px;background:#fff">0</div><div class="c r" style="left:554px;width:61px;background:#fff">500</div><div class="c r" style="left:615px;width:59px;background:#fff">50000</div><div class="c r" style="left:674px;width:59px;background:#fff">10000</div><div class="c" style="left:733px;width:103px;background:#fff">990000000000</div><div class="c" style="left:836px;width:50px;background:#fff">1</div><div class="c r" style="left:886px;width:62px;background:#fff">1</div><div class="c r" style="left:948px;width:62px;background:#fff">0</div><div class="c r" style="left:1010px;width:62px;background:#fff">40</div><div class="c r" style="left:1072px;width:62px;background:#fff">0</div></div><div class="row" style="top:395px;width:1134px"><div class="c n" style="left:0px;width:34px;background:#dce8fb">20</div><div class="c" style="left:34px;width:38px;background:#dce8fb">;</div><div class="c" style="left:72px;width:127px;background:#dce8fb">离休人员</div><div class="c" style="left:199px;width:121px;background:#dce8fb">离休人员</div><div class="c" style="left:320px;width:74px;background:#dce8fb"></div><div class="c r" style="left:394px;width:50px;background:#dce8fb">1</div><div class="c r" style="left:444px;width:56px;background:#dce8fb">0</div><div class="c r" style="left:500px;width:54px;background:#dce8fb">0</div><div class="c r" style="left:554px;width:61px;background:#dce8fb">500</div><div class="c r" style="left:615px;width:59px;background:#dce8fb">40000</div><div class="c r" style="left:674px;width:59px;background:#dce8fb">10000</div><div class="c" style="left:733px;width:103px;background:#dce8fb">990000000000</div><div class="c" style="left:836px;width:50px;background:#dce8fb">1</div><div class="c r" style="left:886px;width:62px;background:#dce8fb">0</div><div class="c r" style="left:948px;width:62px;background:#dce8fb">0</div><div class="c r" style="left:1010px;width:62px;background:#dce8fb"></div><div class="c r" style="left:1072px;width:62px;background:#dce8fb">0</div></div><div class="row" style="top:414px;width:1134px"><div class="c n" style="left:0px;width:34px;background:#fff">21</div><div class="c" style="left:34px;width:38px;background:#fff">&lt;</div><div class="c" style="left:72px;width:127px;background:#fff">科级人员(退休)</div><div class="c" style="left:199px;width:121px;background:#fff">科级人员(退休)</div><div class="c" style="left:320px;width:74px;background:#fff"></div><div class="c r" style="left:394px;width:50px;background:#fff">1</div><div class="c r" style="left:444px;width:56px;background:#fff">0</div><div class="c r" style="left:500px;width:54px;background:#fff">0</div><div class="c r" style="left:554px;width:61px;background:#fff">500</div><div class="c r" style="left:615px;width:59px;background:#fff">40000</div><div class="c r" style="left:674px;width:59px;background:#fff">10000</div><div class="c" style="left:733px;width:103px;background:#fff">990000000000</div><div class="c" style="left:836px;width:50px;background:#fff">1</div><div class="c r" style="left:886px;width:62px;background:#fff">0</div><div class="c r" style="left:948px;width:62px;background:#fff">0</div><div class="c r" style="left:1010px;width:62px;background:#fff">40</div><div class="c r" style="left:1072px;width:62px;background:#fff">0</div></div><div class="row" style="top:433px;width:1134px"><div class="c n" style="left:0px;width:34px;background:#dce8fb">22</div><div class="c" style="left:34px;width:38px;background:#dce8fb">&gt;</div><div class="c" style="left:72px;width:127px;background:#dce8fb">离休,512,二级保健,</div><div class="c" style="left:199px;width:121px;background:#dce8fb">离休,512,二级保健,</div><div class="c" style="left:320px;width:74px;background:#dce8fb"></div><div class="c r" style="left:394px;width:50px;background:#dce8fb">1</div><div class="c r" style="left:444px;width:56px;background:#dce8fb">0</div><div class="c r" style="left:500px;width:54px;background:#dce8fb">0</div><div class="c r" style="left:554px;width:61px;background:#dce8fb">500</div><div class="c r" style="left:615px;width:59px;background:#dce8fb">40000</div><div class="c r" style="left:674px;width:59px;background:#dce8fb">10000</div><div class="c" style="left:733px;width:103px;background:#dce8fb">990000000000</div><div class="c" style="left:836px;width:50px;background:#dce8fb">1</div><div class="c r" style="left:886px;width:62px;background:#dce8fb">0</div><div class="c r" style="left:948px;width:62px;background:#dce8fb">0</div><div class="c r" style="left:1010px;width:62px;background:#dce8fb"></div><div class="c r" style="left:1072px;width:62px;background:#dce8fb">0</div></div><div class="row" style="top:452px;width:1134px"><div class="c n" style="left:0px;width:34px;background:#fff">23</div><div class="c" style="left:34px;width:38px;background:#fff">?</div><div class="c" style="left:72px;width:127px;background:#fff">市属A类在职保健对象</div><div class="c" style="left:199px;width:121px;background:#fff">市属A类在职保健对象</div><div class="c" style="left:320px;width:74px;background:#fff"></div><div class="c r" style="left:394px;width:50px;background:#fff">1</div><div class="c r" style="left:444px;width:56px;background:#fff">0</div><div class="c r" style="left:500px;width:54px;background:#fff">0</div><div class="c r" style="left:554px;width:61px;background:#fff">500</div><div class="c r" style="left:615px;width:59px;background:#fff">40000</div><div class="c r" style="left:674px;width:59px;background:#fff">10000</div><div class="c" style="left:733px;width:103px;background:#fff">990000000000</div><div class="c" style="left:836px;width:50px;background:#fff">1</div><div class="c r" style="left:886px;width:62px;background:#fff">0</div><div class="c r" style="left:948px;width:62px;background:#fff">0</div><div class="c r" style="left:1010px;width:62px;background:#fff">40</div><div class="c r" style="left:1072px;width:62px;background:#fff">0</div></div><div class="row" style="top:471px;width:1134px"><div class="c n" style="left:0px;width:34px;background:#dce8fb">24</div><div class="c" style="left:34px;width:38px;background:#dce8fb">A</div><div class="c" style="left:72px;width:127px;background:#dce8fb">灵活就业退休人员</div><div class="c" style="left:199px;width:121px;background:#dce8fb">灵活就业退休人员</div><div class="c" style="left:320px;width:74px;background:#dce8fb"></div><div class="c r" style="left:394px;width:50px;background:#dce8fb">1</div><div class="c r" style="left:444px;width:56px;background:#dce8fb">0</div><div class="c r" style="left:500px;width:54px;background:#dce8fb">0</div><div class="c r" style="left:554px;width:61px;background:#dce8fb">500</div><div class="c r" style="left:615px;width:59px;background:#dce8fb">50000</div><div class="c r" style="left:674px;width:59px;background:#dce8fb">10000</div><div class="c" style="left:733px;width:103px;background:#dce8fb">990000000000</div><div class="c" style="left:836px;width:50px;background:#dce8fb">1</div><div class="c r" style="left:886px;width:62px;background:#dce8fb">1</div><div class="c r" style="left:948px;width:62px;background:#dce8fb">0</div><div class="c r" style="left:1010px;width:62px;background:#dce8fb">40</div><div class="c r" style="left:1072px;width:62px;background:#dce8fb">0</div></div><div class="row" style="top:490px;width:1134px"><div class="c n" style="left:0px;width:34px;background:#fff">25</div><div class="c" style="left:34px;width:38px;background:#fff">B</div><div class="c" style="left:72px;width:127px;background:#fff">破产企业离休人员</div><div class="c" style="left:199px;width:121px;background:#fff">破产企业离休人员</div><div class="c" style="left:320px;width:74px;background:#fff"></div><div class="c r" style="left:394px;width:50px;background:#fff">1</div><div class="c r" style="left:444px;width:56px;background:#fff">0</div><div class="c r" style="left:500px;width:54px;background:#fff">0</div><div class="c r" style="left:554px;width:61px;background:#fff">500</div><div class="c r" style="left:615px;width:59px;background:#fff">50000</div><div class="c r" style="left:674px;width:59px;background:#fff">10000</div><div class="c" style="left:733px;width:103px;background:#fff">990000000000</div><div class="c" style="left:836px;width:50px;background:#fff">1</div><div class="c r" style="left:886px;width:62px;background:#fff">1</div><div class="c r" style="left:948px;width:62px;background:#fff">0</div><div class="c r" style="left:1010px;width:62px;background:#fff">40</div><div class="c r" style="left:1072px;width:62px;background:#fff">0</div></div><div class="row" style="top:509px;width:1134px"><div class="c n" style="left:0px;width:34px;background:#dce8fb">26</div><div class="c" style="left:34px;width:38px;background:#dce8fb">C</div><div class="c" style="left:72px;width:127px;background:#dce8fb">成年居民(普通)</div><div class="c" style="left:199px;width:121px;background:#dce8fb">成年居民(普通)</div><div class="c" style="left:320px;width:74px;background:#dce8fb"></div><div class="c r" style="left:394px;width:50px;background:#dce8fb">1</div><div class="c r" style="left:444px;width:56px;background:#dce8fb">0</div><div class="c r" style="left:500px;width:54px;background:#dce8fb">0</div><div class="c r" style="left:554px;width:61px;background:#dce8fb">500</div><div class="c r" style="left:615px;width:59px;background:#dce8fb">50000</div><div class="c r" style="left:674px;width:59px;background:#dce8fb">10000</div><div class="c" style="left:733px;width:103px;background:#dce8fb">990000000000</div><div class="c" style="left:836px;width:50px;background:#dce8fb">1</div><div class="c r" style="left:886px;width:62px;background:#dce8fb">1</div><div class="c r" style="left:948px;width:62px;background:#dce8fb">0</div><div class="c r" style="left:1010px;width:62px;background:#dce8fb">40</div><div class="c r" style="left:1072px;width:62px;background:#dce8fb">0</div></div><div class="row" style="top:528px;width:1134px"><div class="c n" style="left:0px;width:34px;background:#fff">27</div><div class="c" style="left:34px;width:38px;background:#fff">D</div><div class="c" style="left:72px;width:127px;background:#fff">成年人</div><div class="c" style="left:199px;width:121px;background:#fff">成年人</div><div class="c" style="left:320px;width:74px;background:#fff"></div><div class="c r" style="left:394px;width:50px;background:#fff">1</div><div class="c r" style="left:444px;width:56px;background:#fff">0</div><div class="c r" style="left:500px;width:54px;background:#fff">0</div><div class="c r" style="left:554px;width:61px;background:#fff">500</div><div class="c r" style="left:615px;width:59px;background:#fff">50000</div><div class="c r" style="left:674px;width:59px;background:#fff">10000</div><div class="c" style="left:733px;width:103px;background:#fff">990000000000</div><div class="c" style="left:836px;width:50px;background:#fff">1</div><div class="c r" style="left:886px;width:62px;background:#fff">1</div><div class="c r" style="left:948px;width:62px;background:#fff">0</div><div class="c r" style="left:1010px;width:62px;background:#fff">40</div><div class="c r" style="left:1072px;width:62px;background:#fff">0</div></div><div class="row" style="top:547px;width:1134px"><div class="c n" style="left:0px;width:34px;background:#dce8fb">28</div><div class="c" style="left:34px;width:38px;background:#dce8fb">E</div><div class="c" style="left:72px;width:127px;background:#dce8fb">非编在职人员</div><div class="c" style="left:199px;width:121px;background:#dce8fb">非编在职人员</div><div class="c" style="left:320px;width:74px;background:#dce8fb"></div><div class="c r" style="left:394px;width:50px;background:#dce8fb">1</div><div class="c r" style="left:444px;width:56px;background:#dce8fb">0</div><div class="c r" style="left:500px;width:54px;background:#dce8fb">0</div><div class="c r" style="left:554px;width:61px;background:#dce8fb">500</div><div class="c r" style="left:615px;width:59px;background:#dce8fb">50000</div><div class="c r" style="left:674px;width:59px;background:#dce8fb">10000</div><div class="c" style="left:733px;width:103px;background:#dce8fb">990000000000</div><div class="c" style="left:836px;width:50px;background:#dce8fb">1</div><div class="c r" style="left:886px;width:62px;background:#dce8fb">1</div><div class="c r" style="left:948px;width:62px;background:#dce8fb">0</div><div class="c r" style="left:1010px;width:62px;background:#dce8fb">40</div><div class="c r" style="left:1072px;width:62px;background:#dce8fb">0</div></div><div class="row" style="top:566px;width:1134px"><div class="c n" style="left:0px;width:34px;background:#fff">29</div><div class="c" style="left:34px;width:38px;background:#fff">F</div><div class="c" style="left:72px;width:127px;background:#fff">512人员</div><div class="c" style="left:199px;width:121px;background:#fff">512人员</div><div class="c" style="left:320px;width:74px;background:#fff"></div><div class="c r" style="left:394px;width:50px;background:#fff">1</div><div class="c r" style="left:444px;width:56px;background:#fff">0</div><div class="c r" style="left:500px;width:54px;background:#fff">0</div><div class="c r" style="left:554px;width:61px;background:#fff">500</div><div class="c r" style="left:615px;width:59px;background:#fff">50000</div><div class="c r" style="left:674px;width:59px;background:#fff">10000</div><div class="c" style="left:733px;width:103px;background:#fff">990000000000</div><div class="c" style="left:836px;width:50px;background:#fff">1</div><div class="c r" style="left:886px;width:62px;background:#fff">1</div><div class="c r" style="left:948px;width:62px;background:#fff">0</div><div class="c r" style="left:1010px;width:62px;background:#fff">40</div><div class="c r" style="left:1072px;width:62px;background:#fff">0</div></div><div class="row" style="top:585px;width:1134px"><div class="c n" style="left:0px;width:34px;background:#dce8fb">30</div><div class="c" style="left:34px;width:38px;background:#dce8fb">G</div><div class="c" style="left:72px;width:127px;background:#dce8fb">财政核拨512人员</div><div class="c" style="left:199px;width:121px;background:#dce8fb">财政核拨512人员</div><div class="c" style="left:320px;width:74px;background:#dce8fb"></div><div class="c r" style="left:394px;width:50px;background:#dce8fb">1</div><div class="c r" style="left:444px;width:56px;background:#dce8fb">0</div><div class="c r" style="left:500px;width:54px;background:#dce8fb">0</div><div class="c r" style="left:554px;width:61px;background:#dce8fb">500</div><div class="c r" style="left:615px;width:59px;background:#dce8fb">50000</div><div class="c r" style="left:674px;width:59px;background:#dce8fb">10000</div><div class="c" style="left:733px;width:103px;background:#dce8fb">990000000000</div><div class="c" style="left:836px;width:50px;background:#dce8fb">1</div><div class="c r" style="left:886px;width:62px;background:#dce8fb">1</div><div class="c r" style="left:948px;width:62px;background:#dce8fb">0</div><div class="c r" style="left:1010px;width:62px;background:#dce8fb">40</div><div class="c r" style="left:1072px;width:62px;background:#dce8fb">0</div></div></div>
<div class="a" style="left:1558px;top:417px;width:16px;height:595px;background-color:#fff;background-image:linear-gradient(45deg,#c0c0c0 25%,transparent 25%,transparent 75%,#c0c0c0 75%),linear-gradient(45deg,#c0c0c0 25%,transparent 25%,transparent 75%,#c0c0c0 75%);background-size:2px 2px;background-position:0 0,1px 1px"></div><div class="a" style="left:1558px;top:417px;width:16px;height:16px;background:#c0c0c0;border-top:1px solid #c8c8c8;border-left:1px solid #c8c8c8;border-right:1px solid #000;border-bottom:1px solid #000;box-shadow:inset 1px 1px 0 #fff,inset -1px -1px 0 #909090"><svg class="a" style="left:3px;top:5px" width="8" height="4" viewBox="0 0 8 4"><path d="M0 4L4 0L8 4z" fill="#000"/></svg></div><div class="a" style="left:1558px;top:433px;width:16px;height:199px;background:#c0c0c0;border-top:1px solid #c8c8c8;border-left:1px solid #c8c8c8;border-right:1px solid #000;border-bottom:1px solid #000;box-shadow:inset 1px 1px 0 #fff,inset -1px -1px 0 #909090"></div><div class="a" style="left:1558px;top:996px;width:16px;height:16px;background:#c0c0c0;border-top:1px solid #c8c8c8;border-left:1px solid #c8c8c8;border-right:1px solid #000;border-bottom:1px solid #000;box-shadow:inset 1px 1px 0 #fff,inset -1px -1px 0 #909090"><svg class="a" style="left:3px;top:5px" width="8" height="4" viewBox="0 0 8 4"><path d="M0 0L4 4L8 0z" fill="#000"/></svg></div>
<div class="a" style="left:5px;top:416px;width:1570px;height:1px;background:#808080"></div><div class="a" style="left:5px;top:416px;width:1px;height:596px;background:#808080"></div><div class="a" style="left:1574px;top:416px;width:2px;height:596px;background:#fff"></div>
<div class="a" style="left:1575px;top:416px;width:170px;height:596px;background:#ffffe1"></div>
<div class="btn" style="left:1776px;top:105px;width:113px;height:25px;"><svg width="16" height="16" viewBox="0 0 16 16" style="margin:-2px 4px 0 0"><g fill="none" stroke-width="3.200"><path d="M8.500 3a5.500 5.500 0 0 1 4.800 8.200" stroke="#90b0e4" stroke-dasharray="1.500 .7"/><path d="M13.300 11.200a5.500 5.500 0 0 1-5.300 2.800" stroke="#6c94d0" stroke-dasharray="1.500 .7"/><path d="M8 14a5.500 5.500 0 0 1-5.200-5.500" stroke="#34669f"/></g><path d="M-.2 8.800h6l-3-4.800z" fill="#2c5c9c"/></svg><span>刷新(<u>Q</u>)</span></div>
<div class="btn" style="left:1776px;top:172px;width:113px;height:25px;">增加医保中心</div>
<div class="btn" style="left:1776px;top:225px;width:113px;height:25px;">删除医保中心</div>
<div class="btn" style="left:1776px;top:280px;width:113px;height:25px;">修改医保中心</div>
<div class="btn" style="left:1776px;top:954px;width:113px;height:25px;"><svg width="17" height="17" viewBox="0 0 17 17" style="margin:-2px 3px 0 0"><defs><linearGradient id="pw" x1="0" y1="0" x2="0" y2="1"><stop offset="0" stop-color="#f07810"/><stop offset="1" stop-color="#d81818"/></linearGradient></defs><circle cx="8.500" cy="9.300" r="7.600" fill="url(#pw)"/><rect x="6.500" y=".5" width="4" height="8.300" fill="#f08010" stroke="#ffe8c8" stroke-width="1"/></svg><span>退出(<u>X</u>)</span></div>
<div class="btn" style="left:1595px;top:446px;width:134px;height:25px;border:1px solid #000;box-shadow:inset 1px 1px 0 #fff,inset -1px -1px 0 #000,inset -2px -2px 0 #707070">增加医保病人类别</div>
<div class="btn" style="left:1595px;top:499px;width:134px;height:25px;">删除医保病人类别</div>
<div class="btn" style="left:1595px;top:554px;width:134px;height:25px;">修改医保病人类别</div>
<div class="a" style="left:0;top:1015px;width:1920px;height:20px;background:linear-gradient(180deg,#c8dcc8 0%,#c6d8c6 40%,#c0c6c0 100%)"></div>
<div class="a" style="left:0;top:1034px;width:1920px;height:1px;background:#a8aca8"></div>
<div class="a" style="left:0;top:1035px;width:1920px;height:3px;background:linear-gradient(180deg,#e8e8e8,#fff 50%,#d8d8d8)"></div>
<div class="sp" style="left:2px;width:141px">易联众ss&lt;D350102001103&gt;</div>
<div class="sp" style="left:145px;width:112px">管理员组</div>
<div class="sp" style="left:259px;width:256px">福建省老年医院&lt;H35010200227&gt;</div>
<div class="sp" style="left:517px;width:171px">易联众医院信息综合管理平台</div>
<div class="sp" style="left:690px;width:143px">2021年11月11日 星期四</div>
<div class="sp" style="left:835px;width:1083px"></div>
<div class="a" style="left:0;top:1038px;width:1920px;height:42px;background:#c0c0c0"></div>
<div class="tb" style="left:2px;width:47px"><svg class="a" style="left:1.3px;top:10px" width="16" height="14" viewBox="0 0 16 14"><defs><radialGradient id="wr" cx=".5" cy=".7" r=".7"><stop offset="0" stop-color="#f8a018"/><stop offset="1" stop-color="#e03818"/></radialGradient><radialGradient id="wg" cx=".35" cy=".6" r=".7"><stop offset="0" stop-color="#b0e050"/><stop offset="1" stop-color="#3c9820"/></radialGradient><radialGradient id="wb" cx=".6" cy=".35" r=".7"><stop offset="0" stop-color="#b8e0f8"/><stop offset="1" stop-color="#2068c8"/></radialGradient><radialGradient id="wy" cx=".4" cy=".4" r=".7"><stop offset="0" stop-color="#fff080"/><stop offset="1" stop-color="#f8a808"/></radialGradient></defs><path d="M2.200 1C4 -.3 6.500 -.3 8.600 1.200L7.600 5.600C5.800 4.400 3.400 4.500 1.300 5.600Z" fill="url(#wr)"/><path d="M9.200 1.900C11 3 13.500 2.800 15.600 1.600L14.200 7.200C12.200 8.400 10 8.400 8.100 7.200Z" fill="url(#wg)"/><path d="M1 6.600C3 5.400 5.400 5.400 7.300 6.600L6.200 11.400C4.400 10.300 2 10.400 0 11.600Z" fill="url(#wb)"/><path d="M7.800 7.900C9.800 9.100 12 9 14 7.900L12.800 12.800C10.800 14 8.600 14 6.700 12.800Z" fill="url(#wy)"/></svg><div class="a" style="left:18px;top:11px;font-size:12px;line-height:14px">开始</div></div>
<div class="tb" style="left:58px;width:48px;height:38px;background:#fff;border-top:1px solid #000;border-left:1px solid #000;border-right:2px solid #dcdcdc;border-bottom:2px solid #dcdcdc"><svg class="a" style="left:6.7px;top:2px" width="32.5" height="32" viewBox="0 0 33 32" preserveAspectRatio="none"><defs><radialGradient id="lg6" cx="16.500" cy="16.500" r="15" gradientUnits="userSpaceOnUse"><stop offset="0" stop-color="#40ecbc"/><stop offset=".45" stop-color="#1e9c94"/><stop offset="1" stop-color="#044c5c"/></radialGradient></defs><path d="M12.300 1.600C14 0 19 -.5 24 2.500C29 5.500 32.500 11 32.300 17.500L31.600 18.200C29 13 24 10 19 7.200C16 5.500 13 4 12.300 1.600Z" fill="#ea5e04"/><path d="M.6 13.800C-.3 19 2.500 25 7.500 29C11.500 32 16.500 32.500 19.300 31.600L19.600 30.300C16 27.500 11 24.500 7 21.500C3.500 19 1.500 16.500 .6 13.800Z" fill="#eeaa18"/><path d="M10.500 1.400C5 3.500 2 8 3.200 12C4.500 16 9 18.500 14 21C19 23.500 22.500 25.500 22.600 30.900C27 28.500 30.500 25 29.800 21C29 17 24.500 14.500 20 12C15 9 10.500 6.500 10.500 1.400Z" fill="url(#lg6)"/></svg></div>
<div class="tb" style="left:108px;width:44px;border-right:1px solid #000;border-bottom:1px solid #000"><svg class="a" style="left:5px;top:5px" width="32" height="29" viewBox="0 0 32 29"><defs><linearGradient id="ff" x1="0" y1="0" x2="1" y2="1"><stop offset="0" stop-color="#fdf8c8"/><stop offset="1" stop-color="#f0d070"/></linearGradient><linearGradient id="fs" x1="0" y1="0" x2="0" y2="1"><stop offset="0" stop-color="#c8ecff"/><stop offset="1" stop-color="#58a8e4"/></linearGradient></defs><path d="M1 2q0-1.500 1.500-1.500h13q1.500 0 1.500 1.500v7h-16z" fill="#f4dc90" stroke="#d8b860" stroke-width=".7"/><rect x="4" y="1.200" width="9" height="1.900" fill="#fff"/><rect x="3.800" y="1" width="3.100" height="2.100" fill="#18c030"/><path d="M10.500 4q0-1.400 1.400-1.400h17q1.400 0 1.400 1.400v6h-19.800z" fill="#f4dc90" stroke="#d8b860" stroke-width=".7"/><rect x="12" y="3.100" width="11" height="1.900" fill="#fff"/><rect x="11.900" y="2.900" width="2.900" height="2.100" fill="#e83020"/><path d="M18.500 6.200q0-1.400 1.400-1.400h10.200q1.400 0 1.400 1.400v5h-13z" fill="#f4dc90" stroke="#d8b860" stroke-width=".7"/><rect x="20" y="5.200" width="8.500" height="1.900" fill="#fff"/><rect x="20" y="5" width="2.900" height="2.100" fill="#2098f8"/><path d="M1 8.500q0-.8.800-.8h14l2 1.100h12.700q.8 0 .8.800v15.800q0 .8-.8.800h-28.700q-.8 0-.8-.8z" fill="url(#ff)" stroke="#d8b860" stroke-width=".8"/><path d="M4.200 18q0-1.700 1.700-1.700h20.200q1.700 0 1.700 1.700v8.800q0 1.500-1.500 1.500h-3.300q-1.500 0-1.500-1.500v-4.300h-11.200v4.300q0 1.500-1.500 1.500h-3.100q-1.500 0-1.500-1.500z" fill="url(#fs)" stroke="#3898e0" stroke-width=".9" fill-opacity=".92"/><path d="M5.500 17.500h21" stroke="#e8f8ff" stroke-width="1"/><path d="M7.500 11.500v8M4.500 16.800l6-6" stroke="#fff" stroke-width=".6" opacity=".8"/></svg></div>
<div class="a" style="left:152px;top:1040px;width:4px;height:38px;border-left:1px solid #fff;border-right:1px solid #000;border-bottom:1px solid #000"></div>
<div class="tb" style="left:158px;width:48px;border-right:1px solid #000;border-bottom:1px solid #000"><svg class="a" style="left:7px;top:3px" width="32" height="30" viewBox="0 0 32 30"><defs><linearGradient id="np" x1=".7" y1="0" x2=".3" y2="1"><stop offset="0" stop-color="#a8dcec"/><stop offset=".5" stop-color="#6cc0d8"/><stop offset="1" stop-color="#3c98b8"/></linearGradient></defs><path d="M5 23l18 6.500 3-1.500-17-6z" fill="#a8a8a8" opacity=".5"/><path d="M27.500 3.100l1.900 1.300.6 19.400-4.400 4.300z" fill="#c8a050"/><path d="M27.500 3.100v19.400l-4.400 6.300-3.700-2.500z" fill="#f0f6fa" stroke="#c8d4dc" stroke-width=".4"/><path d="M26.800 8l-5 17M26.800 12l-4 14M26.800 16l-3 11" stroke="#b8d0e0" stroke-width=".5"/><path d="M10.600.6l16.900 2.500-8.500 22.400-19-5.500z" fill="url(#np)"/><path d="M10.600.6l16.900 2.500-2 5.200-17.300-3.300z" fill="#c0e8f4" opacity=".55"/><path d="M11.500.2v1.600M13.500.5v1.600M15.500.8v1.600M17.500 1.100v1.600M19.500 1.400v1.600M21.500 1.700v1.600M23.500 2v1.600M25.500 2.300v1.600" stroke="#506870" stroke-width=".7"/></svg></div>
<div class="a" style="left:1686px;top:1050px;font-family:'Liberation Mono',monospace;font-size:11px;line-height:14px;letter-spacing:-0.3px">CH</div>
<div class="a" style="left:1705px;top:1046px;width:1px;height:22px;background:#808080"></div><div class="a" style="left:1706px;top:1046px;width:1px;height:22px;background:#fff"></div>
<div class="a" style="left:1734px;top:1046px;width:1px;height:22px;background:#808080"></div><div class="a" style="left:1735px;top:1046px;width:1px;height:22px;background:#fff"></div>
<div class="a" style="left:1762px;top:1046px;width:1px;height:22px;background:#808080"></div><div class="a" style="left:1763px;top:1046px;width:1px;height:22px;background:#fff"></div>
<svg class="a" style="left:1712px;top:1048px" width="18" height="18" viewBox="0 0 30 30"><g transform="rotate(-14 15 15)"><rect x="3" y="3" width="24" height="24" rx="4" fill="#2eb81e"/><path d="M22 9.500c-3-2.500-12-2.500-13 1.500-1 4 12 3 12 7 0 4-9 4-13.500 1" fill="none" stroke="#fff" stroke-width="3.600" stroke-linecap="round"/></g></svg>
<svg class="a" style="left:1740px;top:1048px" width="18" height="18" viewBox="0 0 18 18"><defs><radialGradient id="qg" cx=".4" cy=".3" r=".8"><stop offset="0" stop-color="#4868f0"/><stop offset="1" stop-color="#000878"/></radialGradient></defs><circle cx="9" cy="9" r="8" fill="url(#qg)" stroke="#606878" stroke-width="1.200"/><text x="9" y="13.500" text-anchor="middle" font-family="Liberation Sans" font-weight="bold" font-size="12" fill="#fff">?</text></svg>
<svg class="a" style="left:1767px;top:1047px" width="11" height="18" viewBox="0 0 11 18"><path d="M3.500 1.500h6v3.500h-2M3.500 1.500v2" stroke="#000" fill="none" stroke-width="1.200"/><rect x="1.500" y="3.800" width="6" height="3.400" stroke="#000" fill="none" stroke-width="1.200"/><path d="M2.500 13h6l-3 3z" fill="#000"/></svg>
<div class="a" style="left:1780px;top:1040px;width:138px;height:38px;border:1px solid #808080;border-right-color:#fff;border-bottom-color:#fff"></div>
<svg class="a" style="left:1786px;top:1052px" width="9" height="10" viewBox="0 0 9 10"><path d="M1 4.500l3.500-3 3.500 3M1 9l3.500-3 3.500 3" stroke="#000" stroke-width="1.600" fill="none"/></svg>
<svg class="a" style="left:1801px;top:1050px" width="20" height="18" viewBox="0 0 20 18"><path d="M1 6h3l5-5v15l-5-5h-3z" fill="#e8e8e8" stroke="#787878" stroke-width="1"/><circle cx="13" cy="12" r="4" fill="#fff" stroke="#e01020" stroke-width="1.800"/><path d="M10.300 9.300l5.400 5.400" stroke="#e01020" stroke-width="1.800"/></svg>
<div class="a" style="left:1848px;top:1044px;font-size:12px;line-height:14px;letter-spacing:0.5px">17:44</div>
<div class="a" style="left:1833px;top:1060px;font-size:12px;line-height:14px;letter-spacing:0.4px">2021-11-11</div>
<svg class="a" style="left:1900px;top:1053px" width="16" height="13" viewBox="0 0 16 13"><rect x=".5" y=".5" width="15" height="12" fill="#3c8cdc" stroke="#b0c8e0" stroke-width="1"/><rect x="1" y="9.500" width="14" height="2.500" fill="#183858"/><path d="M1 1h14l-14 7z" fill="#68b0f0"/></svg>
<div class="a" style="left:1363px;top:1010px;width:142px;height:24px;background:#fcfdff;border:1px solid #b8cce4"></div>
<svg class="a" style="left:1340px;top:1005px" width="31" height="31" viewBox="0 0 30 30"><g transform="rotate(-14 15 15)"><rect x="3" y="3" width="24" height="24" rx="4" fill="#2eb81e"/><path d="M22 9.500c-3-2.500-12-2.500-13 1.500-1 4 12 3 12 7 0 4-9 4-13.500 1" fill="none" stroke="#fff" stroke-width="3.600" stroke-linecap="round"/></g></svg>
<div class="a" style="left:1375px;top:1013px;font-family:'Liberation Sans',sans-serif;font-size:15px;line-height:18px;font-weight:bold;color:#444a60">英</div>
<svg class="a" style="left:1397px;top:1014px" width="110" height="18" viewBox="0 0 110 18"><g fill="#444a60"><path d="M10.800 1.800A7.340 7.340 0 1 1 .8 11.500A8.740 8.740 0 0 0 10.800 1.800Z"/><circle cx="25.800" cy="5.250" r="2.200"/><path d="M28.900 8.060a2.200 2.200 0 1 1 4.400 0c0 2.400-1.300 4-3.800 4.600l-.5-.9c1.200-.4 1.900-1 2.100-1.600a2.200 2.200 0 0 1-2.200-2.100z"/><path d="M44 2h14a1.500 1.500 0 0 1 1.500 1.500v8.500a1.500 1.500 0 0 1-1.500 1.500h-14a1.500 1.500 0 0 1-1.500-1.500v-8.500a1.500 1.500 0 0 1 1.500-1.500zm.5 2v2h2v-2zm3.300 0v2h2v-2zm3.300 0v2h2v-2zm3.300 0v2h2v-2zm-9.900 3.200v2h2v-2zm3.300 0v2h2v-2zm3.300 0v2h2v-2zm3.300 0v2h2v-2zm-8.400 3.200v1.600h10v-1.600z" fill-rule="evenodd"/><path transform="translate(102 1.500) scale(.82) translate(-104.900 -1.500)" d="M101 1.500a4.500 4.500 0 0 0-4.300 6l-7.700 7.500a1.600 1.600 0 0 0 2.300 2.300l7.600-7.600a4.500 4.500 0 0 0 5.800-5.700l-2.700 2.700-2.500-.7-.7-2.500z"/></g><g fill="#bcd8d4"><circle cx="73" cy="4.500" r="3.200"/><path d="M67 14.500c0-4 2-6 6-6s6 2 6 6l-1 2h-10z"/></g></svg>
<div class="a" style="left:764px;top:58px;width:547px;height:364px;background:#c0c0c0;border-top:1px solid #d8d8d8;border-left:1px solid #d8d8d8;border-right:2px solid #606060;border-bottom:2px solid #606060;box-shadow:inset 1px 1px 0 #fff"></div>
<div class="a" style="left:768px;top:62px;width:539px;height:18px;background:linear-gradient(90deg,#0a246a 0%,#0a2a80 25%,#0c50b0 60%,#1084d0 100%)"></div>
<svg class="a" style="left:770px;top:63px" width="16" height="16" viewBox="0 0 33 32" preserveAspectRatio="none"><defs><radialGradient id="lg770" cx="16.500" cy="16.500" r="15" gradientUnits="userSpaceOnUse"><stop offset="0" stop-color="#40ecbc"/><stop offset=".45" stop-color="#1e9c94"/><stop offset="1" stop-color="#044c5c"/></radialGradient></defs><path d="M12.300 1.600C14 0 19 -.5 24 2.500C29 5.500 32.500 11 32.300 17.500L31.600 18.200C29 13 24 10 19 7.200C16 5.500 13 4 12.300 1.600Z" fill="#ea5e04"/><path d="M.6 13.800C-.3 19 2.500 25 7.500 29C11.500 32 16.500 32.500 19.300 31.600L19.600 30.300C16 27.500 11 24.500 7 21.500C3.500 19 1.500 16.500 .6 13.800Z" fill="#eeaa18"/><path d="M10.500 1.400C5 3.500 2 8 3.200 12C4.500 16 9 18.500 14 21C19 23.500 22.500 25.500 22.600 30.900C27 28.500 30.500 25 29.800 21C29 17 24.500 14.500 20 12C15 9 10.500 6.500 10.500 1.400Z" fill="url(#lg770)"/></svg>
<div class="a" style="left:788px;top:64px;height:15px;color:#fff;font-size:13px;line-height:15px;font-weight:bold;letter-spacing:-0.2px">医保类别综合维护项目</div>
<div class="a" style="left:1289px;top:64px;width:16px;height:14px;background:#c0c0c0;border-top:1px solid #fff;border-left:1px solid #fff;border-right:1px solid #000;border-bottom:1px solid #000;box-shadow:inset -1px -1px 0 #808080"><svg class="a" style="left:3px;top:2px" width="9" height="8" viewBox="0 0 9 8"><path d="M1 0.500L8 7.500M8 0.500L1 7.500" stroke="#000" stroke-width="1.600"/></svg></div>
<div class="a" style="left:768px;top:80px;width:539px;height:337px;background:#ffffe1"></div>
<div class="a" style="left:768px;top:417px;width:539px;height:2px;background:#202020"></div>
<div class="a" style="left:1305px;top:104px;width:2px;height:315px;background:#202020"></div>
<div class="a" style="left:768px;top:103px;width:539px;height:1px;background:#f4f4f4"></div>
<div class="a" style="left:768px;top:104px;width:1px;height:314px;background:#f4f4f4"></div>
<div class="a t14" style="left:768px;top:81px;width:128px;height:23px;background:#c0c0c0;border-top:1px solid #f0f0f0;border-left:1px solid #f0f0f0;border-right:2px solid #404040;border-radius:2px 2px 0 0;padding:3px 0 0 7px">医保病人类别增加</div>
<div class="lbl" style="left:770px;width:114px;top:121px">类别</div>
<div class="lbl" style="left:985px;width:107px;top:121px">类别名称</div>
<div class="inp" style="left:1100px;top:116px;width:168px;height:21px"></div>
<div class="inp" style="left:892px;top:116px;width:87px;height:21px;"></div>
<div class="lbl" style="left:770px;width:112px;top:150px">参保类型</div>
<div class="lbl" style="left:985px;width:107px;top:150px">类别简称</div>
<div class="inp" style="left:1100px;top:145px;width:168px;height:21px"></div>
<div class="inp" style="left:892px;top:145px;width:87px;height:20px"></div>
<div class="a" style="left:962px;top:147px;width:16px;height:16px;background:#c0c0c0;border-top:1px solid #fff;border-left:1px solid #fff;border-right:1px solid #000;border-bottom:1px solid #000;box-shadow:inset -1px -1px 0 #808080"><svg class="a" style="left:3px;top:5px" width="8" height="4" viewBox="0 0 8 4"><path d="M0 0L4 4L8 0z" fill="#000"/></svg></div>
<div class="a" style="left:895px;top:148px;width:65px;height:14px;background:#000080;outline:1px dotted #e8e860;outline-offset:-1px"></div>
<div class="lbl" style="left:770px;width:112px;top:180px">是否目录限制</div>
<div class="lbl" style="left:985px;width:107px;top:180px">非医保编码规则</div>
<div class="inp" style="left:1100px;top:175px;width:168px;height:21px">990000000000</div>
<div class="inp" style="left:892px;top:175px;width:87px;height:20px">1</div>
<div class="a" style="left:962px;top:177px;width:16px;height:16px;background:#c0c0c0;border-top:1px solid #fff;border-left:1px solid #fff;border-right:1px solid #000;border-bottom:1px solid #000;box-shadow:inset -1px -1px 0 #808080"><svg class="a" style="left:3px;top:5px" width="8" height="4" viewBox="0 0 8 4"><path d="M0 0L4 4L8 0z" fill="#000"/></svg></div>
<div class="lbl" style="left:770px;width:114px;top:210px">住院支付上限</div>
<div class="lbl" style="left:985px;width:104px;top:210px">门诊自付比率</div>
<div class="inp" style="left:1100px;top:205px;width:87px;height:21px">0</div>
<div class="inp" style="left:892px;top:205px;width:87px;height:21px;">40000</div>
<div class="lbl" style="left:770px;width:114px;top:239px">门诊支付上限</div>
<div class="lbl" style="left:985px;width:104px;top:239px">医保自付比率</div>
<div class="inp" style="left:1100px;top:234px;width:87px;height:21px">0</div>
<div class="inp" style="left:892px;top:234px;width:87px;height:21px;">10000</div>
<div class="lbl" style="left:770px;width:112px;top:269px">医保中心编号</div>
<div class="lbl" style="left:985px;width:104px;top:269px">起付标准</div>
<div class="inp" style="left:1100px;top:264px;width:87px;height:21px">500</div>
<div class="inp" style="left:892px;top:264px;width:87px;height:21px;color:#8a9a8c;">1</div>
<div class="lbl" style="left:770px;width:114px;top:299px">床位最高报销标准</div>
<div class="lbl" style="left:985px;width:104px;top:299px">预交金放大比例</div>
<div class="inp" style="left:1100px;top:294px;width:87px;height:21px">0</div>
<div class="inp" style="left:892px;top:294px;width:87px;height:21px;">0</div>
<div class="lbl" style="left:770px;width:114px;top:329px">医保病人透支金额</div>
<div class="lbl" style="left:985px;width:104px;top:329px">预交金放大上限</div>
<div class="inp" style="left:1100px;top:324px;width:87px;height:21px">0</div>
<div class="inp" style="left:892px;top:324px;width:87px;height:21px;">0</div>
<svg class="a" style="left:1116px;top:146px" width="9" height="16" viewBox="0 0 9 16"><path d="M4.500 0v15M1 15h7" stroke="#301030" stroke-width="1.200" fill="none"/></svg>
<div class="btn" style="left:872px;top:362px;width:92px;height:31px;"><svg width="18" height="16" viewBox="0 0 18 16" style="margin-right:4px"><path d="M2 9l4.500 5L16 2" stroke="#000090" stroke-width="3.400" fill="none" transform="translate(0,1)"/><path d="M2 9l4.500 5L16 2" stroke="#18c018" stroke-width="3" fill="none"/></svg><span>确定(<u>Q</u>)</span></div>
<div class="btn" style="left:1095px;top:362px;width:92px;height:31px;"><svg width="16" height="16" viewBox="0 0 16 16" style="margin-right:3px"><path d="M2 1h6v11h4" stroke="#000" stroke-width="1" fill="#fff"/><path d="M2 1l4.500 2.500v12l-4.500-3z" fill="#a09018" stroke="#403800" stroke-width=".8"/><path d="M15 7h-3v-2l-2.500 2.800 2.500 2.800v-2h3z" fill="#1020c0"/></svg><span>退出(<u>X</u>)</span></div>
<div class="red" style="left:920px;top:83px;font-size:18px;letter-spacing:0.62px;line-height:21px">根据编码序列自动生成</div>
<div class="red" style="left:1371px;top:117px;font-size:18px;letter-spacing:0.62px;line-height:21px">能从错误信息中获取最好</div>
<div class="red" style="left:1371px;top:138px;font-size:18px;letter-spacing:0.62px;line-height:21px">让前台操作员复制也可以</div>
<div class="red" style="left:993px;top:361px;font-size:18px;letter-spacing:0.62px;line-height:21px">默认40</div>
<svg class="a" style="left:0;top:0" width="1920" height="1080" viewBox="0 0 1920 1080"><path d="M1010.0 111.0L999.7 119.3" stroke="#ff0a0a" stroke-width="3.2" stroke-linecap="round"/><path d="M984.0 132.0 L1000.1 107.4 L999.7 119.3 L1011.4 121.4 z" fill="#ff0a0a"/><path d="M1362.0 137.0L1325.0 131.8" stroke="#ff0a0a" stroke-width="3.2" stroke-linecap="round"/><path d="M1305.0 129.0 L1333.7 126.0 L1325.0 131.8 L1331.8 139.8 z" fill="#ff0a0a"/><path d="M1366.0 150.0L1304.4 158.9" stroke="#ff0a0a" stroke-width="3.2" stroke-linecap="round"/><path d="M1283.0 162.0 L1311.5 149.8 L1304.4 158.9 L1313.8 165.6 z" fill="#ff0a0a"/><path d="M1004.0 356.0L989.0 328.4" stroke="#ff0a0a" stroke-width="3.2" stroke-linecap="round"/><path d="M980.0 312.0 L1000.4 330.5 L989.0 328.4 L984.5 339.1 z" fill="#ff0a0a"/></svg>
</body></html>
